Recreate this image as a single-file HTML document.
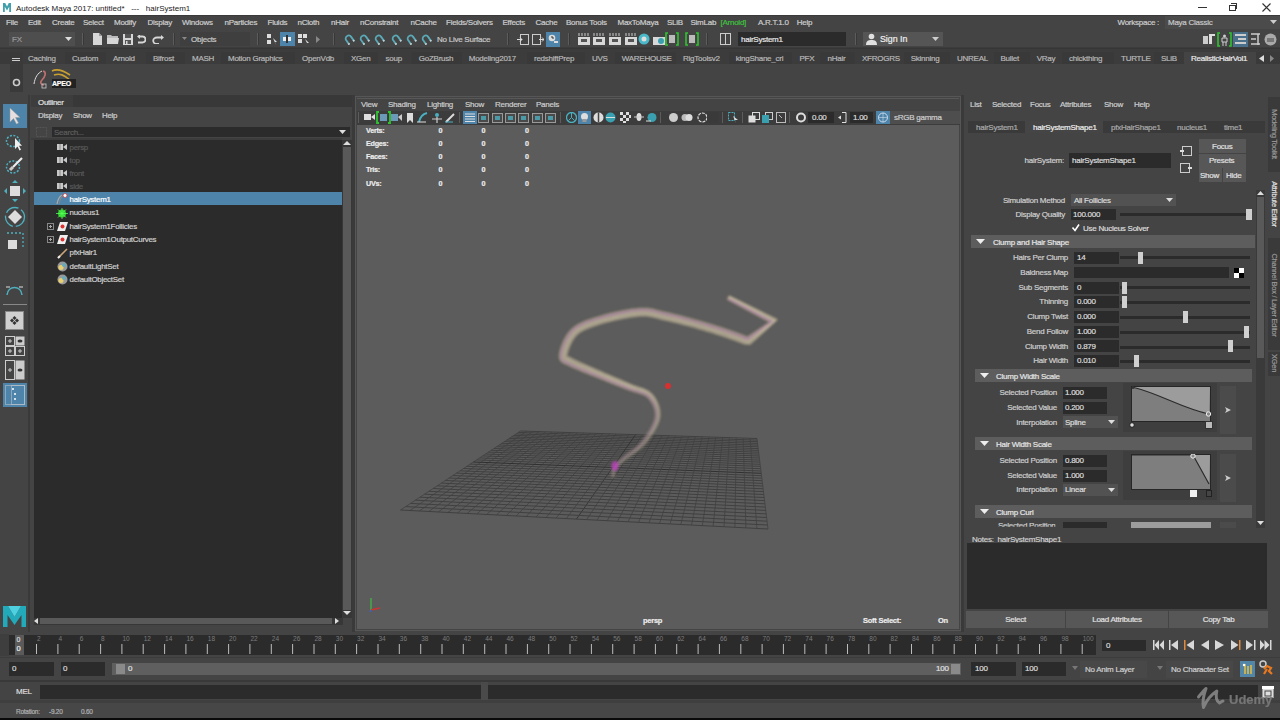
<!DOCTYPE html>
<html><head><meta charset="utf-8">
<style>
*{margin:0;padding:0;box-sizing:border-box}
html,body{width:1280px;height:720px;overflow:hidden;background:#444;font-family:"Liberation Sans",sans-serif;color:#c8c8c8;font-size:9px}
.a{position:absolute}
.t{position:absolute;white-space:nowrap;line-height:1;letter-spacing:-0.25px;-webkit-text-stroke:0.2px currentColor}
</style></head><body>
<div class="a" style="left:0px;top:0px;width:1280px;height:15px;background:#ffffff;"></div><svg class="a" style="left:3px;top:3px;" width="8" height="9" viewBox="0 0 8 9"><path d="M0 9V0h2.2l1.8 3.6L5.8 0H8v9H6.2V3.8L4 7.4 1.8 3.8V9z" fill="#1f8f9c" opacity="0.85"/></svg><div class="t" style="left:16px;top:5.24px;font-size:8px;color:#222;letter-spacing:0;-webkit-text-stroke:0">Autodesk Maya 2017: untitled*&nbsp;&nbsp;&nbsp;---&nbsp;&nbsp;&nbsp;hairSystem1</div><div class="a" style="left:1198px;top:7px;width:9px;height:1px;background:#333;"></div><div class="a" style="left:1229px;top:5px;width:7px;height:6px;border:1px solid #333"></div><div class="a" style="left:1231px;top:3px;width:6px;height:6px;border-top:1px solid #333;border-right:1px solid #333"></div><svg class="a" style="left:1262px;top:3px;" width="9" height="9" viewBox="0 0 9 9"><path d="M0.5 0.5L8.5 8.5M8.5 0.5L0.5 8.5" stroke="#333" stroke-width="1.1"/></svg><div class="a" style="left:0px;top:15px;width:1280px;height:16px;background:#444;"></div><div class="a" style="left:0px;top:15px;width:1280px;height:1px;background:#3a3a3a;"></div><div class="t" style="left:6px;top:19.24px;font-size:8.0px;color:#cecece;">File</div><div class="t" style="left:28px;top:19.24px;font-size:8.0px;color:#cecece;">Edit</div><div class="t" style="left:52px;top:19.24px;font-size:8.0px;color:#cecece;">Create</div><div class="t" style="left:83px;top:19.24px;font-size:8.0px;color:#cecece;">Select</div><div class="t" style="left:114px;top:19.24px;font-size:8.0px;color:#cecece;">Modify</div><div class="t" style="left:147.5px;top:19.24px;font-size:8.0px;color:#cecece;">Display</div><div class="t" style="left:182px;top:19.24px;font-size:8.0px;color:#cecece;">Windows</div><div class="t" style="left:224.5px;top:19.24px;font-size:8.0px;color:#cecece;">nParticles</div><div class="t" style="left:267.5px;top:19.24px;font-size:8.0px;color:#cecece;">Fluids</div><div class="t" style="left:297.5px;top:19.24px;font-size:8.0px;color:#cecece;">nCloth</div><div class="t" style="left:331px;top:19.24px;font-size:8.0px;color:#cecece;">nHair</div><div class="t" style="left:360px;top:19.24px;font-size:8.0px;color:#cecece;">nConstraint</div><div class="t" style="left:410.5px;top:19.24px;font-size:8.0px;color:#cecece;">nCache</div><div class="t" style="left:446px;top:19.24px;font-size:8.0px;color:#cecece;">Fields/Solvers</div><div class="t" style="left:502.5px;top:19.24px;font-size:8.0px;color:#cecece;">Effects</div><div class="t" style="left:535.5px;top:19.24px;font-size:8.0px;color:#cecece;">Cache</div><div class="t" style="left:566px;top:19.24px;font-size:8.0px;color:#cecece;">Bonus Tools</div><div class="t" style="left:617.5px;top:19.24px;font-size:8.0px;color:#cecece;">MaxToMaya</div><div class="t" style="left:667px;top:19.24px;font-size:8.0px;color:#cecece;">SLiB</div><div class="t" style="left:690.5px;top:19.24px;font-size:8.0px;color:#cecece;">SimLab</div><div class="t" style="left:758px;top:19.24px;font-size:8.0px;color:#cecece;">A.R.T.1.0</div><div class="t" style="left:796.75px;top:19.24px;font-size:8.0px;color:#cecece;">Help</div><div class="t" style="left:720.5px;top:19.24px;font-size:8.0px;color:#3fc23f;">[Arnold]</div><div class="t" style="left:1117.5px;top:18.74px;font-size:8.0px;color:#cecece;">Workspace :</div><div class="a" style="left:1165px;top:16px;width:115px;height:13px;background:#4b4b4b;"></div><div class="t" style="left:1168px;top:18.74px;font-size:8.0px;color:#c8c8c8;">Maya Classic</div><svg class="a" style="left:1270px;top:20px;" width="7" height="5" viewBox="0 0 7 5"><path d="M0 0h7L3.5 4z" fill="#ccc"/></svg><div class="a" style="left:0px;top:31px;width:1280px;height:17px;background:#444;"></div><div class="a" style="left:9px;top:32px;width:66px;height:14px;background:#4e4e4e;"></div><div class="t" style="left:12px;top:35.74px;font-size:8px;color:#9a9a9a;">FX</div><svg class="a" style="left:65px;top:37px;" width="7" height="4" viewBox="0 0 7 4"><path d="M0 0h7L3.5 4z" fill="#ddd"/></svg><div class="a" style="left:82px;top:33px;width:1px;height:12px;background:#5c5c5c;"></div><div class="a" style="left:83px;top:33px;width:1px;height:12px;background:#383838;"></div><div class="a" style="left:173px;top:33px;width:1px;height:12px;background:#5c5c5c;"></div><div class="a" style="left:174px;top:33px;width:1px;height:12px;background:#383838;"></div><div class="a" style="left:257px;top:33px;width:1px;height:12px;background:#5c5c5c;"></div><div class="a" style="left:258px;top:33px;width:1px;height:12px;background:#383838;"></div><div class="a" style="left:333px;top:33px;width:1px;height:12px;background:#5c5c5c;"></div><div class="a" style="left:334px;top:33px;width:1px;height:12px;background:#383838;"></div><div class="a" style="left:507px;top:33px;width:1px;height:12px;background:#5c5c5c;"></div><div class="a" style="left:508px;top:33px;width:1px;height:12px;background:#383838;"></div><div class="a" style="left:568px;top:33px;width:1px;height:12px;background:#5c5c5c;"></div><div class="a" style="left:569px;top:33px;width:1px;height:12px;background:#383838;"></div><div class="a" style="left:706px;top:33px;width:1px;height:12px;background:#5c5c5c;"></div><div class="a" style="left:707px;top:33px;width:1px;height:12px;background:#383838;"></div><div class="a" style="left:855px;top:33px;width:1px;height:12px;background:#5c5c5c;"></div><div class="a" style="left:856px;top:33px;width:1px;height:12px;background:#383838;"></div><svg class="a" style="left:93px;top:33px;" width="9" height="12" viewBox="0 0 9 12"><path d="M0 0h6l3 3v9H0z" fill="#d6d6d6"/><path d="M6 0v3h3" fill="#999"/></svg><svg class="a" style="left:107px;top:34px;" width="12" height="10" viewBox="0 0 12 10"><path d="M0 1h4l1 1h6v2H0z" fill="#bbb"/><path d="M0 4h12l-1 6H0z" fill="#d6d6d6"/></svg><svg class="a" style="left:123px;top:34px;" width="10" height="11" viewBox="0 0 10 11"><path d="M0 0h10v11H0z" fill="#d6d6d6"/><rect x="2" y="0" width="6" height="4" fill="#555"/><rect x="2" y="6" width="6" height="4" fill="#555"/><rect x="3" y="7" width="1.5" height="3" fill="#d6d6d6"/></svg><svg class="a" style="left:137px;top:35px;" width="9" height="9" viewBox="0 0 9 9"><path d="M2 1.5h3.5a3 3 0 0 1 0 6H1" fill="none" stroke="#d6d6d6" stroke-width="1.8"/><path d="M0 1.5L3 -1v5z" fill="#d6d6d6"/></svg><svg class="a" style="left:152px;top:35px;" width="12" height="9" viewBox="0 0 12 9"><path d="M10 2.5H5a3.5 3 0 0 0 0 6.5h2" fill="none" stroke="#d6d6d6" stroke-width="1.8"/><path d="M12 2.5L9 0v5z" fill="#d6d6d6"/></svg><div class="a" style="left:180px;top:32px;width:70px;height:14px;background:#3f3f3f;"></div><svg class="a" style="left:182px;top:37px;" width="5" height="4" viewBox="0 0 5 4"><path d="M0 0h5L2.5 3z" fill="#888"/></svg><div class="t" style="left:191px;top:35.74px;font-size:8.0px;color:#c8c8c8;">Objects</div><svg class="a" style="left:267px;top:34px;" width="11" height="11" viewBox="0 0 11 11"><rect x="0" y="0" width="4" height="4" fill="#ddd"/><rect x="0" y="6" width="4" height="4" fill="#ddd"/><path d="M6 4l4 4-2 0 1 3z" fill="#ddd"/></svg><div class="a" style="left:280px;top:32px;width:15px;height:14px;background:#4e84aa;"></div><svg class="a" style="left:282px;top:34px;" width="11" height="10" viewBox="0 0 11 10"><rect x="1" y="3" width="3" height="4" fill="#eee"/><rect x="6" y="3" width="3" height="4" fill="#eee"/><rect x="4" y="1" width="2" height="8" fill="#333"/></svg><svg class="a" style="left:298px;top:34px;" width="12" height="11" viewBox="0 0 12 11"><rect x="0" y="0" width="4" height="4" fill="#ddd"/><rect x="5" y="0" width="4" height="4" fill="#ddd"/><rect x="0" y="5" width="4" height="4" fill="#ddd"/><path d="M7 5l4 4-2 0 1 2z" fill="#ddd"/></svg><svg class="a" style="left:316px;top:36px;" width="4" height="7" viewBox="0 0 4 7"><path d="M0 0l4 3.5L0 7z" fill="#888"/></svg><svg class="a" style="left:343px;top:33px;" width="12" height="12" viewBox="0 0 12 12"><g transform="rotate(-35 6 6)"><path d="M3 11V5.5a3 3 0 0 1 6 0V11" fill="none" stroke="#5aaab8" stroke-width="1.8"/><path d="M2.2 10h1.8M8 10h1.8" stroke="#ccc" stroke-width="1.6"/></g></svg><svg class="a" style="left:358px;top:33px;" width="12" height="12" viewBox="0 0 12 12"><g transform="rotate(-35 6 6)"><path d="M3 11V5.5a3 3 0 0 1 6 0V11" fill="none" stroke="#5aaab8" stroke-width="1.8"/><path d="M2.2 10h1.8M8 10h1.8" stroke="#ccc" stroke-width="1.6"/></g></svg><svg class="a" style="left:373px;top:33px;" width="12" height="12" viewBox="0 0 12 12"><g transform="rotate(-35 6 6)"><path d="M3 11V5.5a3 3 0 0 1 6 0V11" fill="none" stroke="#5aaab8" stroke-width="1.8"/><path d="M2.2 10h1.8M8 10h1.8" stroke="#ccc" stroke-width="1.6"/></g></svg><svg class="a" style="left:390px;top:33px;" width="12" height="12" viewBox="0 0 12 12"><g transform="rotate(-35 6 6)"><path d="M3 11V5.5a3 3 0 0 1 6 0V11" fill="none" stroke="#5aaab8" stroke-width="1.8"/><path d="M2.2 10h1.8M8 10h1.8" stroke="#ccc" stroke-width="1.6"/></g></svg><svg class="a" style="left:405px;top:33px;" width="12" height="12" viewBox="0 0 12 12"><g transform="rotate(-35 6 6)"><path d="M3 11V5.5a3 3 0 0 1 6 0V11" fill="none" stroke="#5aaab8" stroke-width="1.8"/><path d="M2.2 10h1.8M8 10h1.8" stroke="#ccc" stroke-width="1.6"/></g></svg><svg class="a" style="left:420px;top:33px;" width="12" height="12" viewBox="0 0 12 12"><g transform="rotate(-35 6 6)"><path d="M3 11V5.5a3 3 0 0 1 6 0V11" fill="none" stroke="#5aaab8" stroke-width="1.8"/><path d="M2.2 10h1.8M8 10h1.8" stroke="#ccc" stroke-width="1.6"/></g></svg><div class="t" style="left:437px;top:35.74px;font-size:8.0px;color:#c8c8c8;">No Live Surface</div><svg class="a" style="left:517px;top:34px;" width="12" height="11" viewBox="0 0 12 11"><rect x="3.5" y="0.5" width="8" height="10" fill="none" stroke="#ccc"/><path d="M0 5.5h5M3 3.5l2 2-2 2" stroke="#ddd" fill="none"/></svg><svg class="a" style="left:532px;top:34px;" width="12" height="11" viewBox="0 0 12 11"><rect x="0.5" y="0.5" width="8" height="10" fill="none" stroke="#ccc"/><path d="M7 5.5h5M10 3.5l2 2-2 2" stroke="#ddd" fill="none"/></svg><div class="a" style="left:546px;top:32px;width:14px;height:15px;background:#4e84aa;"></div><svg class="a" style="left:548px;top:34px;" width="10" height="11" viewBox="0 0 10 11"><circle cx="4" cy="4" r="3.3" fill="#ddd"/><path d="M4 2v2h2" stroke="#333" fill="none"/><rect x="6" y="7" width="4" height="2" fill="#ddd"/></svg><svg class="a" style="left:578px;top:33px;" width="12" height="12" viewBox="0 0 12 12"><rect x="0" y="4" width="12" height="8" fill="#d8d8d8"/><path d="M1 0v3M4 0v3M7 0v3M10 0v3" stroke="#ccc"/><rect x="3" y="6" width="6" height="3" fill="#555"/></svg><svg class="a" style="left:593px;top:33px;" width="12" height="12" viewBox="0 0 12 12"><rect x="0" y="4" width="12" height="8" fill="#d8d8d8"/><path d="M1 0v3M4 0v3M7 0v3M10 0v3" stroke="#ccc"/><rect x="3" y="6" width="6" height="3" fill="#555"/></svg><svg class="a" style="left:609px;top:33px;" width="12" height="12" viewBox="0 0 12 12"><rect x="0" y="4" width="12" height="8" fill="#d8d8d8"/><path d="M1 0v3M4 0v3M7 0v3M10 0v3" stroke="#ccc"/><rect x="3" y="6" width="6" height="3" fill="#555"/></svg><svg class="a" style="left:625px;top:33px;" width="12" height="12" viewBox="0 0 12 12"><rect x="0" y="4" width="12" height="8" fill="#d8d8d8"/><path d="M1 0v3M4 0v3M7 0v3M10 0v3" stroke="#ccc"/><rect x="3" y="6" width="6" height="3" fill="#555"/></svg><svg class="a" style="left:638px;top:33px;" width="12" height="12" viewBox="0 0 12 12"><circle cx="6" cy="6" r="5.5" fill="#4ab8c8"/><circle cx="6" cy="6" r="2.5" fill="#ddd"/></svg><svg class="a" style="left:653px;top:33px;" width="12" height="12" viewBox="0 0 12 12"><rect x="0" y="4" width="12" height="8" fill="#d8d8d8"/><circle cx="8" cy="8" r="3" fill="#3aa0b0"/></svg><svg class="a" style="left:665px;top:32px;" width="14" height="14" viewBox="0 0 14 14"><path d="M3 1H1v12h2M11 1h2v12h-2" stroke="#2fc42f" stroke-width="1.6" fill="none"/><rect x="4" y="3" width="6" height="8" fill="#bbb"/></svg><svg class="a" style="left:685px;top:32px;" width="14" height="14" viewBox="0 0 14 14"><path d="M3 1H1v12h2M11 1h2v12h-2" stroke="#2fc42f" stroke-width="1.6" fill="none"/><rect x="4" y="3" width="6" height="8" fill="#bbb"/></svg><svg class="a" style="left:720px;top:33px;" width="11" height="12" viewBox="0 0 11 12"><rect x="0.5" y="0.5" width="10" height="11" fill="none" stroke="#ccc"/><path d="M5.5 0v12" stroke="#ccc"/></svg><div class="a" style="left:738px;top:32px;width:108px;height:14px;background:#2b2b2b;"></div><div class="t" style="left:741px;top:35.74px;font-size:8.0px;color:#e6e6e6;">hairSystem1</div><div class="a" style="left:863px;top:32px;width:80px;height:14px;background:#555;"></div><svg class="a" style="left:866px;top:33px;" width="11" height="12" viewBox="0 0 11 12"><circle cx="5.5" cy="3.5" r="2.8" fill="#e0e0e0"/><path d="M0 12c0-4 2-5 5.5-5s5.5 1 5.5 5z" fill="#e0e0e0"/></svg><div class="t" style="left:880px;top:35.36px;font-size:8.8px;color:#eeeeee;letter-spacing:0">Sign In</div><svg class="a" style="left:932px;top:37px;" width="7" height="4" viewBox="0 0 7 4"><path d="M0 0h7L3.5 4z" fill="#ccc"/></svg><svg class="a" style="left:1203px;top:33px;" width="12" height="12" viewBox="0 0 12 12"><rect x="0" y="3" width="5" height="8" fill="#ccc"/><rect x="6" y="1" width="3" height="10" fill="#ddd"/><rect x="9" y="1" width="3" height="2" fill="#ddd"/></svg><svg class="a" style="left:1217px;top:32px;" width="15" height="15" viewBox="0 0 15 15"><path d="M3 1H1v13h2M12 1h2v13h-2" stroke="#2fc42f" stroke-width="1.6" fill="none"/><circle cx="7.5" cy="4" r="1.5" fill="#ccc"/><path d="M5 6h5v4H5zM6 10v4M9 10v4" stroke="#ccc" fill="none"/></svg><div class="a" style="left:1233px;top:32px;width:15px;height:15px;background:#4a6f8a;"></div><svg class="a" style="left:1235px;top:34px;" width="11" height="11" viewBox="0 0 11 11"><rect x="0" y="0" width="11" height="2" fill="#ccc"/><rect x="3" y="4" width="8" height="2" fill="#ccc"/><rect x="0" y="8" width="11" height="2" fill="#ccc"/></svg><svg class="a" style="left:1250px;top:33px;" width="11" height="12" viewBox="0 0 11 12"><path d="M1 1h9M1 6h5M1 11h9M8 1v11" stroke="#ccc" stroke-width="1.5" fill="none"/></svg><svg class="a" style="left:1264px;top:33px;" width="13" height="13" viewBox="0 0 13 13"><circle cx="6.5" cy="6.5" r="6" fill="#aaa"/><rect x="3" y="5" width="7" height="4" fill="#777"/></svg><div class="a" style="left:0px;top:47px;width:1280px;height:5px;background:#3c3c3c;"></div><div class="a" style="left:0px;top:48px;width:1280px;height:1px;background:#363636;"></div><div class="a" style="left:0px;top:52px;width:1280px;height:12px;background:#3a3a3a;"></div><div class="a" style="left:21px;top:52px;width:44px;height:12px;background:#3c3c3c;"></div><div class="a" style="left:65px;top:52px;width:41px;height:12px;background:#393939;"></div><div class="a" style="left:106px;top:52px;width:40px;height:12px;background:#3c3c3c;"></div><div class="a" style="left:146px;top:52px;width:39px;height:12px;background:#393939;"></div><div class="a" style="left:185px;top:52px;width:36px;height:12px;background:#3c3c3c;"></div><div class="a" style="left:221px;top:52px;width:74px;height:12px;background:#393939;"></div><div class="a" style="left:295px;top:52px;width:49px;height:12px;background:#3c3c3c;"></div><div class="a" style="left:344px;top:52px;width:34px;height:12px;background:#393939;"></div><div class="a" style="left:378px;top:52px;width:33px;height:12px;background:#3c3c3c;"></div><div class="a" style="left:412px;top:52px;width:50px;height:12px;background:#393939;"></div><div class="a" style="left:462px;top:52px;width:65px;height:12px;background:#3c3c3c;"></div><div class="a" style="left:527px;top:52px;width:58px;height:12px;background:#393939;"></div><div class="a" style="left:585px;top:52px;width:30px;height:12px;background:#3c3c3c;"></div><div class="a" style="left:615px;top:52px;width:61px;height:12px;background:#393939;"></div><div class="a" style="left:676px;top:52px;width:53px;height:12px;background:#3c3c3c;"></div><div class="a" style="left:729px;top:52px;width:64px;height:12px;background:#393939;"></div><div class="a" style="left:792px;top:52px;width:28px;height:12px;background:#3c3c3c;"></div><div class="a" style="left:820px;top:52px;width:34px;height:12px;background:#393939;"></div><div class="a" style="left:855px;top:52px;width:49px;height:12px;background:#3c3c3c;"></div><div class="a" style="left:904px;top:52px;width:46px;height:12px;background:#393939;"></div><div class="a" style="left:950px;top:52px;width:44px;height:12px;background:#3c3c3c;"></div><div class="a" style="left:994px;top:52px;width:36px;height:12px;background:#393939;"></div><div class="a" style="left:1030px;top:52px;width:32px;height:12px;background:#3c3c3c;"></div><div class="a" style="left:1062px;top:52px;width:52px;height:12px;background:#393939;"></div><div class="a" style="left:1114px;top:52px;width:40px;height:12px;background:#3c3c3c;"></div><div class="a" style="left:1154px;top:52px;width:23px;height:12px;background:#393939;"></div><div class="t" style="left:28px;top:54.74px;font-size:8.0px;color:#b8b8b8;">Caching</div><div class="t" style="left:72px;top:54.74px;font-size:8.0px;color:#b8b8b8;">Custom</div><div class="t" style="left:113px;top:54.74px;font-size:8.0px;color:#b8b8b8;">Arnold</div><div class="t" style="left:153px;top:54.74px;font-size:8.0px;color:#b8b8b8;">Bifrost</div><div class="t" style="left:192px;top:54.74px;font-size:8.0px;color:#b8b8b8;">MASH</div><div class="t" style="left:228px;top:54.74px;font-size:8.0px;color:#b8b8b8;">Motion Graphics</div><div class="t" style="left:302px;top:54.74px;font-size:8.0px;color:#b8b8b8;">OpenVdb</div><div class="t" style="left:351px;top:54.74px;font-size:8.0px;color:#b8b8b8;">XGen</div><div class="t" style="left:385.5px;top:54.74px;font-size:8.0px;color:#b8b8b8;">soup</div><div class="t" style="left:418.75px;top:54.74px;font-size:8.0px;color:#b8b8b8;">GoZBrush</div><div class="t" style="left:468.75px;top:54.74px;font-size:8.0px;color:#b8b8b8;">Modeling2017</div><div class="t" style="left:534px;top:54.74px;font-size:8.0px;color:#b8b8b8;">redshiftPrep</div><div class="t" style="left:592px;top:54.74px;font-size:8.0px;color:#b8b8b8;">UVS</div><div class="t" style="left:621.75px;top:54.74px;font-size:8.0px;color:#b8b8b8;">WAREHOUSE</div><div class="t" style="left:683px;top:54.74px;font-size:8.0px;color:#b8b8b8;">RigToolsv2</div><div class="t" style="left:735.75px;top:54.74px;font-size:8.0px;color:#b8b8b8;">kingShane_cri</div><div class="t" style="left:799.5px;top:54.74px;font-size:8.0px;color:#b8b8b8;">PFX</div><div class="t" style="left:827.5px;top:54.74px;font-size:8.0px;color:#b8b8b8;">nHair</div><div class="t" style="left:862px;top:54.74px;font-size:8.0px;color:#b8b8b8;">XFROGRS</div><div class="t" style="left:910.75px;top:54.74px;font-size:8.0px;color:#b8b8b8;">Skinning</div><div class="t" style="left:957px;top:54.74px;font-size:8.0px;color:#b8b8b8;">UNREAL</div><div class="t" style="left:1000.5px;top:54.74px;font-size:8.0px;color:#b8b8b8;">Bullet</div><div class="t" style="left:1036.75px;top:54.74px;font-size:8.0px;color:#b8b8b8;">VRay</div><div class="t" style="left:1069px;top:54.74px;font-size:8.0px;color:#b8b8b8;">chickthing</div><div class="t" style="left:1121px;top:54.74px;font-size:8.0px;color:#b8b8b8;">TURTLE</div><div class="t" style="left:1161px;top:54.74px;font-size:8.0px;color:#b8b8b8;">SLiB</div><div class="a" style="left:1184px;top:52px;width:72px;height:12px;background:#444;"></div><div class="t" style="left:1191px;top:54.74px;font-size:8.0px;color:#ececec;">RealisticHairVol1</div><svg class="a" style="left:1259px;top:55px;" width="5" height="7" viewBox="0 0 5 7"><path d="M5 0L0 3.5 5 7z" fill="#ddd"/></svg><svg class="a" style="left:1270px;top:55px;" width="4" height="7" viewBox="0 0 4 7"><path d="M0 0l4 3.5L0 7z" fill="#888"/></svg><div class="a" style="left:0px;top:64px;width:1280px;height:31px;background:#444;"></div><div class="a" style="left:10px;top:52px;width:13px;height:40px;background:#3a3a3a;"></div><div class="a" style="left:12px;top:58px;width:8px;height:1px;background:#ccc;"></div><div class="a" style="left:12px;top:60px;width:8px;height:1px;background:#ccc;"></div><svg class="a" style="left:12px;top:78px;" width="9" height="9" viewBox="0 0 9 9"><circle cx="4.5" cy="4.5" r="3" fill="none" stroke="#ccc" stroke-width="1.6"/></svg><svg class="a" style="left:32px;top:67px;" width="16" height="22" viewBox="0 0 16 22"><path d="M2 17C3 10 6 6 10 4" stroke="#ddd" stroke-width="1" fill="none"/><path d="M11 4c4 1 2 6 -1 9s0 5 2 5" stroke="#c07070" stroke-width="1.6" fill="none"/><rect x="10" y="17" width="4" height="4" fill="none" stroke="#ccc" stroke-width="0.8"/></svg><svg class="a" style="left:50px;top:67px;" width="26" height="22" viewBox="0 0 26 22"><path d="M2 4c6-3 12 0 18 4M4 8c6-2 10 0 16 5" stroke="#c9a030" stroke-width="1.6" fill="none"/><rect x="2" y="12" width="24" height="9" fill="#222"/></svg><div class="t" style="left:52px;top:79.71px;font-size:7px;color:#fff;font-weight:bold">APEO</div><div class="a" style="left:0px;top:95px;width:28px;height:537px;background:#444;"></div><div class="a" style="left:28px;top:95px;width:2px;height:537px;background:#3a3a3a;"></div><div class="a" style="left:3px;top:104px;width:24px;height:24px;background:#4e84aa;"></div><svg class="a" style="left:9px;top:107px;" width="12" height="18" viewBox="0 0 12 18"><path d="M1 1v14l3.5-3.5 3 5.5 2-1-3-5.5H11z" fill="#e8e0e0" stroke="#999" stroke-width="0.5"/></svg><svg class="a" style="left:5px;top:133px;" width="20" height="18" viewBox="0 0 20 18"><ellipse cx="8" cy="8" rx="6.5" ry="5.5" fill="none" stroke="#4fb0c0" stroke-width="1.5" stroke-dasharray="2 1.5"/><path d="M10 5v11l2.5-2.5 2 4 1.5-.8-2-4H17z" fill="#eee"/></svg><svg class="a" style="left:5px;top:156px;" width="20" height="19" viewBox="0 0 20 19"><ellipse cx="8" cy="11" rx="6.5" ry="6" fill="none" stroke="#4fb0c0" stroke-width="1.5" stroke-dasharray="2 1.5"/><path d="M8 11l9-9" stroke="#eee" stroke-width="2.2"/><path d="M5 14l3-3" stroke="#ccc" stroke-width="3"/></svg><svg class="a" style="left:4px;top:180px;" width="22" height="22" viewBox="0 0 22 22"><rect x="6" y="6" width="10" height="10" fill="#ddd"/><path d="M11 0l3 3H8zM11 22l3-3H8zM0 11l3 3V8zM22 11l-3 3V8z" fill="#4fb0c0"/></svg><svg class="a" style="left:4px;top:206px;" width="22" height="22" viewBox="0 0 22 22"><circle cx="11" cy="11" r="9.5" fill="none" stroke="#4fb0c0" stroke-width="1.3" stroke-dasharray="14 3"/><path d="M11 4l7 7-7 7-7-7z" fill="#ddd"/></svg><svg class="a" style="left:4px;top:230px;" width="22" height="22" viewBox="0 0 22 22"><path d="M3 3h16v16" fill="none" stroke="#4fb0c0" stroke-width="1.3" stroke-dasharray="2 2"/><rect x="4" y="10" width="9" height="9" fill="#ddd"/></svg><svg class="a" style="left:5px;top:281px;" width="19" height="15" viewBox="0 0 19 15"><path d="M2 14C3 4 16 4 17 14" fill="none" stroke="#4fb0c0" stroke-width="1.5"/><path d="M1 6h4M14 6h4" stroke="#ddd" stroke-width="1.2"/></svg><div class="a" style="left:3px;top:304px;width:24px;height:1px;background:#888;"></div><div class="a" style="left:5px;top:311px;width:19px;height:19px;background:#cfcfcf;border:1px solid #888"></div><svg class="a" style="left:7px;top:313px;" width="15" height="15" viewBox="0 0 15 15"><path d="M7.5 3l2 2-2 2-2-2zM3 7.5l2-2 2 2-2 2zM12 7.5l-2-2-2 2 2 2zM7.5 12l2-2-2-2-2 2z" fill="#333"/></svg><svg class="a" style="left:5px;top:336px;" width="20" height="20" viewBox="0 0 20 20"><rect x="0.5" y="0.5" width="9" height="9" fill="none" stroke="#ccc"/><rect x="10.5" y="0.5" width="9" height="9" fill="#ccc"/><rect x="0.5" y="10.5" width="9" height="9" fill="none" stroke="#ccc"/><rect x="10.5" y="10.5" width="9" height="9" fill="none" stroke="#ccc"/><path d="M5 3v4M3 5h4M5 13v4M3 15h4M15 13v4M13 15h4" stroke="#ccc"/><ellipse cx="15" cy="5" rx="2.5" ry="1.5" fill="#333"/></svg><svg class="a" style="left:5px;top:360px;" width="20" height="20" viewBox="0 0 20 20"><rect x="0.5" y="0.5" width="9" height="19" fill="none" stroke="#ccc"/><rect x="10.5" y="0.5" width="9" height="19" fill="#ccc"/><path d="M5 8v4M3 10h4" stroke="#ccc"/><ellipse cx="15" cy="10" rx="2.5" ry="1.5" fill="#333"/></svg><div class="a" style="left:3px;top:383px;width:24px;height:24px;background:#4e84aa;"></div><svg class="a" style="left:5px;top:385px;" width="20" height="20" viewBox="0 0 20 20"><rect x="0.5" y="0.5" width="19" height="19" fill="none" stroke="#ccc" stroke-dasharray="1 1"/><rect x="6.5" y="0.5" width="13" height="19" fill="none" stroke="#ccc" stroke-dasharray="1 1"/><circle cx="8" cy="4" r="1" fill="#fff"/><circle cx="10" cy="9" r="1" fill="#fff"/><circle cx="10" cy="14" r="1" fill="#fff"/></svg><svg class="a" style="left:3px;top:606px;" width="23" height="21" viewBox="0 0 23 21"><path d="M0 21V0h5l6.5 11L18 0h5v21h-4.5V9L11.5 19 4.5 9v12z" fill="#22aabb"/><path d="M5 0l6.5 11L18 0" fill="#4fd0e0"/></svg><div class="a" style="left:31px;top:95px;width:321px;height:537px;background:#444;"></div><div class="a" style="left:31px;top:95px;width:321px;height:12px;background:#383838;"></div><div class="a" style="left:31px;top:95px;width:42px;height:12px;background:#3d3d3d;"></div><div class="t" style="left:38px;top:98.79px;font-size:7.9px;color:#e0e0e0;">Outliner</div><div class="t" style="left:38px;top:111.79px;font-size:7.9px;color:#cfcfcf;">Display</div><div class="t" style="left:73px;top:111.79px;font-size:7.9px;color:#cfcfcf;">Show</div><div class="t" style="left:102px;top:111.79px;font-size:7.9px;color:#cfcfcf;">Help</div><svg class="a" style="left:36px;top:127px;" width="11" height="10" viewBox="0 0 11 10"><rect x="0.5" y="0.5" width="10" height="9" fill="none" stroke="#555" stroke-dasharray="2 1"/></svg><div class="a" style="left:52px;top:127px;width:298px;height:10px;background:#2b2b2b;"></div><div class="t" style="left:54px;top:128.74px;font-size:8px;color:#5e5e5e;">Search...</div><svg class="a" style="left:339px;top:130px;" width="7" height="4" viewBox="0 0 7 4"><path d="M0 0h7L3.5 4z" fill="#ddd"/></svg><div class="a" style="left:31px;top:138px;width:311px;height:2px;background:#3c3c3c;"></div><div class="a" style="left:34px;top:140px;width:308px;height:478px;background:#2b2b2b;"></div><div class="a" style="left:342px;top:140px;width:10px;height:478px;background:#373737;"></div><div class="a" style="left:343px;top:147px;width:8px;height:463px;background:#595959;"></div><svg class="a" style="left:343px;top:141px;" width="8" height="4" viewBox="0 0 8 4"><path d="M0 4h8L4 0z" fill="#ddd"/></svg><svg class="a" style="left:343px;top:611px;" width="8" height="4" viewBox="0 0 8 4"><path d="M0 0h8L4 4z" fill="#ddd"/></svg><div class="a" style="left:34px;top:618px;width:309px;height:7px;background:#373737;"></div><div class="a" style="left:40px;top:618px;width:292px;height:6px;background:#595959;"></div><svg class="a" style="left:34px;top:618px;" width="4" height="6" viewBox="0 0 4 6"><path d="M4 0L0 3l4 3z" fill="#ddd"/></svg><svg class="a" style="left:335px;top:618px;" width="4" height="6" viewBox="0 0 4 6"><path d="M0 0l4 3-4 3z" fill="#ddd"/></svg><div class="a" style="left:34px;top:192px;width:308px;height:13px;background:#4e84aa;"></div><div class="t" style="left:69.5px;top:143.79px;font-size:7.9px;color:#5a5a5a;">persp</div><svg class="a" style="left:57px;top:144px;" width="10" height="6" viewBox="0 0 10 6"><rect x="0" y="0" width="6" height="6" fill="#c8c8c8"/><path d="M6 3l4-3v6z" fill="#c8c8c8"/><path d="M3 0v6" stroke="#888"/></svg><div class="t" style="left:69.5px;top:156.79px;font-size:7.9px;color:#5a5a5a;">top</div><svg class="a" style="left:57px;top:157px;" width="10" height="6" viewBox="0 0 10 6"><rect x="0" y="0" width="6" height="6" fill="#c8c8c8"/><path d="M6 3l4-3v6z" fill="#c8c8c8"/><path d="M3 0v6" stroke="#888"/></svg><div class="t" style="left:69.5px;top:169.79px;font-size:7.9px;color:#5a5a5a;">front</div><svg class="a" style="left:57px;top:170px;" width="10" height="6" viewBox="0 0 10 6"><rect x="0" y="0" width="6" height="6" fill="#c8c8c8"/><path d="M6 3l4-3v6z" fill="#c8c8c8"/><path d="M3 0v6" stroke="#888"/></svg><div class="t" style="left:69.5px;top:182.79px;font-size:7.9px;color:#5a5a5a;">side</div><svg class="a" style="left:57px;top:183px;" width="10" height="6" viewBox="0 0 10 6"><rect x="0" y="0" width="6" height="6" fill="#c8c8c8"/><path d="M6 3l4-3v6z" fill="#c8c8c8"/><path d="M3 0v6" stroke="#888"/></svg><div class="t" style="left:69.5px;top:195.79px;font-size:7.9px;color:#ffffff;">hairSystem1</div><svg class="a" style="left:56px;top:193px;" width="12" height="12" viewBox="0 0 12 12"><path d="M1 11C2 6 4 3 6 2" stroke="#aaa" stroke-width="1.2" fill="none"/><path d="M3 11C4 7 5 4 7 3" stroke="#888" stroke-width="1" fill="none"/><circle cx="9" cy="2.5" r="2" fill="#fff" stroke="#c44" stroke-width="0.8"/></svg><div class="t" style="left:69.5px;top:209.29px;font-size:7.9px;color:#d0d0d0;">nucleus1</div><svg class="a" style="left:56px;top:207.5px;" width="12" height="11" viewBox="0 0 12 11"><circle cx="6" cy="5.5" r="4" fill="#3c3"/><path d="M0 5.5h12M6 0v11M2 1.5l8 8M10 1.5l-8 8" stroke="#5f5" stroke-width="0.8"/></svg><div class="t" style="left:69.5px;top:222.79px;font-size:7.9px;color:#d0d0d0;">hairSystem1Follicles</div><svg class="a" style="left:57px;top:222px;" width="11" height="9" viewBox="0 0 11 9"><path d="M3 0h8L8 9H0z" fill="#eee"/><circle cx="5.5" cy="4.5" r="2" fill="#d33"/></svg><div class="a" style="left:47px;top:223px;width:7px;height:7px;border:1px solid #888"></div><div class="a" style="left:49px;top:226px;width:3px;height:1px;background:#aaa;"></div><div class="a" style="left:50px;top:225px;width:1px;height:3px;background:#aaa;"></div><div class="t" style="left:69.5px;top:235.79px;font-size:7.9px;color:#d0d0d0;">hairSystem1OutputCurves</div><svg class="a" style="left:57px;top:235px;" width="11" height="9" viewBox="0 0 11 9"><path d="M3 0h8L8 9H0z" fill="#eee"/><circle cx="5.5" cy="4.5" r="2" fill="#d33"/></svg><div class="a" style="left:47px;top:236px;width:7px;height:7px;border:1px solid #888"></div><div class="a" style="left:49px;top:239px;width:3px;height:1px;background:#aaa;"></div><div class="a" style="left:50px;top:238px;width:1px;height:3px;background:#aaa;"></div><div class="t" style="left:69.5px;top:249.29px;font-size:7.9px;color:#d0d0d0;">pfxHair1</div><svg class="a" style="left:57px;top:247.5px;" width="11" height="11" viewBox="0 0 11 11"><path d="M1 10L10 1" stroke="#c9a57a" stroke-width="1.6"/><path d="M1 10l2-2" stroke="#eee" stroke-width="2"/></svg><div class="t" style="left:69.5px;top:262.79px;font-size:7.9px;color:#d0d0d0;">defaultLightSet</div><svg class="a" style="left:57px;top:261px;" width="11" height="11" viewBox="0 0 11 11"><circle cx="5.5" cy="5.5" r="5" fill="#999"/><circle cx="4" cy="6.5" r="2.5" fill="#e8d070"/><circle cx="7" cy="4" r="2" fill="#6ab"/></svg><div class="t" style="left:69.5px;top:275.79px;font-size:7.9px;color:#d0d0d0;">defaultObjectSet</div><svg class="a" style="left:57px;top:274px;" width="11" height="11" viewBox="0 0 11 11"><circle cx="5.5" cy="5.5" r="5" fill="#999"/><circle cx="4" cy="6.5" r="2.5" fill="#e8d070"/><circle cx="7" cy="4" r="2" fill="#6ab"/></svg><div class="a" style="left:352px;top:95px;width:3px;height:537px;background:#3a3a3a;"></div><div class="a" style="left:355px;top:95px;width:607px;height:537px;background:#444;"></div><div class="a" style="left:355px;top:96px;width:606px;height:535px;border:1px solid #565656"></div><div class="a" style="left:357px;top:98px;width:602px;height:1px;background:#585858;"></div><div class="t" style="left:361px;top:101.24px;font-size:8.0px;color:#cecece;">View</div><div class="t" style="left:388px;top:101.24px;font-size:8.0px;color:#cecece;">Shading</div><div class="t" style="left:427px;top:101.24px;font-size:8.0px;color:#cecece;">Lighting</div><div class="t" style="left:465px;top:101.24px;font-size:8.0px;color:#cecece;">Show</div><div class="t" style="left:495px;top:101.24px;font-size:8.0px;color:#cecece;">Renderer</div><div class="t" style="left:536px;top:101.24px;font-size:8.0px;color:#cecece;">Panels</div><div class="a" style="left:357px;top:111px;width:603px;height:14px;background:#3c3c3c;"></div><div class="a" style="left:357px;top:125px;width:602px;height:504px;background:#5c5c5c;"></div><div class="a" style="left:358px;top:112px;width:1px;height:11px;background:#5c5c5c;"></div><div class="a" style="left:459px;top:112px;width:1px;height:11px;background:#5c5c5c;"></div><div class="a" style="left:560px;top:112px;width:1px;height:11px;background:#5c5c5c;"></div><div class="a" style="left:660px;top:112px;width:1px;height:11px;background:#5c5c5c;"></div><div class="a" style="left:722px;top:112px;width:1px;height:11px;background:#5c5c5c;"></div><div class="a" style="left:742px;top:112px;width:1px;height:11px;background:#5c5c5c;"></div><div class="a" style="left:789px;top:112px;width:1px;height:11px;background:#5c5c5c;"></div><svg class="a" style="left:364px;top:113px;" width="11" height="8" viewBox="0 0 11 8"><rect x="0" y="1" width="7" height="6" fill="#ddd"/><path d="M7 4l4-3v6z" fill="#ddd"/></svg><svg class="a" style="left:376px;top:111px;" width="15" height="13" viewBox="0 0 15 13"><path d="M3 1H1v11h2M12 1h2v11h-2" stroke="#2fc42f" stroke-width="1.8" fill="none"/><rect x="4" y="3" width="7" height="7" fill="#6a9ab8"/></svg><svg class="a" style="left:391px;top:113px;" width="11" height="9" viewBox="0 0 11 9"><rect x="0" y="1" width="7" height="7" fill="#6a9ab8"/><path d="M7 4l4-3v7z" fill="#ccc"/></svg><svg class="a" style="left:407px;top:113px;" width="6" height="10" viewBox="0 0 6 10"><path d="M0 0h6v10L3 7 0 10z" fill="#ddd"/></svg><svg class="a" style="left:417px;top:112px;" width="11" height="11" viewBox="0 0 11 11"><path d="M2 10C3 5 6 2 10 1" stroke="#4ab0c0" stroke-width="2" fill="none"/><path d="M0 10h9" stroke="#ddd"/></svg><svg class="a" style="left:432px;top:112px;" width="10" height="11" viewBox="0 0 10 11"><circle cx="5" cy="3" r="2" fill="#4ab0c0"/><path d="M0 7h10M5 5v6" stroke="#ccc" stroke-width="1.2"/></svg><svg class="a" style="left:445px;top:112px;" width="10" height="11" viewBox="0 0 10 11"><path d="M1 10L9 2" stroke="#ddd" stroke-width="2"/><path d="M0 10h8" stroke="#4ab0c0"/></svg><div class="a" style="left:463px;top:111px;width:14px;height:13px;background:#4e84aa;"></div><svg class="a" style="left:465px;top:113px;" width="10" height="9" viewBox="0 0 10 9"><path d="M0 1h10M0 3.5h10M0 6h10M0 8.5h10" stroke="#ddd"/></svg><svg class="a" style="left:478px;top:113px;" width="11" height="10" viewBox="0 0 11 10"><rect x="0.5" y="0.5" width="10" height="9" fill="#4a4a4a" stroke="#999"/><rect x="3" y="3" width="5" height="4" fill="#4a9aa8"/></svg><svg class="a" style="left:492px;top:113px;" width="11" height="10" viewBox="0 0 11 10"><rect x="0.5" y="0.5" width="10" height="9" fill="#4a4a4a" stroke="#999"/><rect x="3" y="3" width="5" height="4" fill="#4a9aa8"/></svg><svg class="a" style="left:505px;top:113px;" width="11" height="10" viewBox="0 0 11 10"><rect x="0.5" y="0.5" width="10" height="9" fill="#4a4a4a" stroke="#999"/><rect x="3" y="3" width="5" height="4" fill="#4a9aa8"/></svg><svg class="a" style="left:518px;top:113px;" width="11" height="10" viewBox="0 0 11 10"><rect x="0.5" y="0.5" width="10" height="9" fill="#4a4a4a" stroke="#999"/><rect x="3" y="3" width="5" height="4" fill="#4a9aa8"/></svg><svg class="a" style="left:532px;top:113px;" width="11" height="10" viewBox="0 0 11 10"><rect x="0.5" y="0.5" width="10" height="9" fill="#4a4a4a" stroke="#999"/><rect x="3" y="3" width="5" height="4" fill="#4a9aa8"/></svg><svg class="a" style="left:545px;top:113px;" width="11" height="10" viewBox="0 0 11 10"><rect x="0.5" y="0.5" width="10" height="9" fill="#4a4a4a" stroke="#999"/><rect x="3" y="3" width="5" height="4" fill="#4a9aa8"/></svg><svg class="a" style="left:566px;top:112px;" width="11" height="11" viewBox="0 0 11 11"><circle cx="5.5" cy="5.5" r="5" fill="none" stroke="#4ab0c0" stroke-width="1.3"/><path d="M5.5 5.5l-3 3M5.5 5.5l3 3M5.5 5.5v-5" stroke="#4ab0c0"/></svg><div class="a" style="left:578px;top:111px;width:13px;height:13px;background:#4e84aa;"></div><svg class="a" style="left:580px;top:112px;" width="9" height="11" viewBox="0 0 9 11"><circle cx="4.5" cy="4.5" r="3.5" fill="#ddd"/><rect x="2.5" y="7" width="4" height="3" fill="#999"/></svg><svg class="a" style="left:593px;top:112px;" width="11" height="11" viewBox="0 0 11 11"><circle cx="5.5" cy="5.5" r="5" fill="#ddd"/><path d="M5.5 0.5v10" stroke="#444" stroke-width="1.5"/></svg><svg class="a" style="left:605px;top:112px;" width="11" height="11" viewBox="0 0 11 11"><circle cx="5.5" cy="5.5" r="5" fill="#3aa0b0"/><path d="M1 5.5h9" stroke="#ddd"/></svg><svg class="a" style="left:620px;top:112px;" width="11" height="11" viewBox="0 0 11 11"><path d="M0 0h3v3H0zM6 0h3v3H6zM3 3h3v3H3zM9 3h2v3H9zM0 6h3v3H0zM6 6h3v3H6zM3 9h3v2H3z" fill="#ddd"/></svg><svg class="a" style="left:634px;top:112px;" width="10" height="11" viewBox="0 0 10 11"><ellipse cx="5" cy="5" rx="2.5" ry="4" fill="#ddd"/><path d="M0 5h10" stroke="#ccc"/></svg><svg class="a" style="left:646px;top:112px;" width="11" height="11" viewBox="0 0 11 11"><circle cx="6" cy="5.5" r="4.5" fill="#3aa0b0"/><path d="M0 9h5" stroke="#ddd"/></svg><svg class="a" style="left:668px;top:112px;" width="11" height="11" viewBox="0 0 11 11"><circle cx="5.5" cy="5.5" r="4.5" fill="#ccc"/></svg><svg class="a" style="left:681px;top:112px;" width="12" height="11" viewBox="0 0 12 11"><circle cx="4" cy="5.5" r="3.5" fill="#bbb"/><circle cx="8" cy="5.5" r="3.5" fill="#ddd"/></svg><svg class="a" style="left:697px;top:112px;" width="11" height="11" viewBox="0 0 11 11"><circle cx="5.5" cy="5.5" r="4.5" fill="none" stroke="#ddd" stroke-width="1.2" stroke-dasharray="3 1"/></svg><div class="a" style="left:707px;top:112px;width:11px;height:11px;background:#3a3a3a;"></div><svg class="a" style="left:728px;top:112px;" width="10" height="11" viewBox="0 0 10 11"><rect x="0.5" y="0.5" width="6" height="8" fill="none" stroke="#4ab0c0" stroke-dasharray="2 1"/><path d="M5 4l5 4H7l1 3z" fill="#ddd"/></svg><svg class="a" style="left:748px;top:112px;" width="12" height="11" viewBox="0 0 12 11"><rect x="0.5" y="3.5" width="7" height="7" fill="#ddd"/><rect x="4.5" y="0.5" width="7" height="7" fill="none" stroke="#ddd"/></svg><svg class="a" style="left:762px;top:112px;" width="11" height="11" viewBox="0 0 11 11"><rect x="3.5" y="0.5" width="7" height="7" fill="none" stroke="#ccc"/><rect x="0" y="3" width="7" height="8" fill="#3aa0b0"/></svg><svg class="a" style="left:776px;top:112px;" width="10" height="11" viewBox="0 0 10 11"><rect x="0.5" y="0.5" width="9" height="10" fill="none" stroke="#bbb"/><path d="M3 3l3 3" stroke="#bbb"/></svg><svg class="a" style="left:796px;top:112px;" width="10" height="11" viewBox="0 0 10 11"><circle cx="5" cy="5.5" r="4" fill="none" stroke="#ddd" stroke-width="2"/></svg><div class="a" style="left:808px;top:112px;width:26px;height:11px;background:#2b2b2b;"></div><div class="t" style="left:812px;top:114.24px;font-size:8.0px;color:#ddd;">0.00</div><svg class="a" style="left:838px;top:112px;" width="9" height="11" viewBox="0 0 9 11"><path d="M4 0.5h4v10H4" fill="none" stroke="#ddd"/><path d="M0 5.5l3-2v4z" fill="#ddd"/></svg><div class="a" style="left:850px;top:112px;width:23px;height:11px;background:#2b2b2b;"></div><div class="t" style="left:853px;top:114.24px;font-size:8.0px;color:#ddd;">1.00</div><div class="a" style="left:876px;top:111px;width:14px;height:13px;background:#4e84aa;"></div><svg class="a" style="left:877px;top:112px;" width="12" height="11" viewBox="0 0 12 11"><circle cx="6" cy="5.5" r="4.5" fill="none" stroke="#cde" stroke-width="1"/><path d="M6 1v9M1.5 5.5h9" stroke="#cde" stroke-width="0.6"/></svg><div class="a" style="left:890px;top:111px;width:70px;height:13px;background:#4e4e4e;"></div><div class="t" style="left:894px;top:114.24px;font-size:8.0px;color:#cfcfcf;">sRGB gamma</div><div class="t" style="left:366px;top:126.62px;font-size:7.2px;color:#ececec;font-weight:bold">Verts:</div><div class="t" style="left:438.5px;top:126.62px;font-size:7.2px;color:#ececec;font-weight:bold">0</div><div class="t" style="left:481.5px;top:126.62px;font-size:7.2px;color:#ececec;font-weight:bold">0</div><div class="t" style="left:525px;top:126.62px;font-size:7.2px;color:#ececec;font-weight:bold">0</div><div class="t" style="left:366px;top:139.62px;font-size:7.2px;color:#ececec;font-weight:bold">Edges:</div><div class="t" style="left:438.5px;top:139.62px;font-size:7.2px;color:#ececec;font-weight:bold">0</div><div class="t" style="left:481.5px;top:139.62px;font-size:7.2px;color:#ececec;font-weight:bold">0</div><div class="t" style="left:525px;top:139.62px;font-size:7.2px;color:#ececec;font-weight:bold">0</div><div class="t" style="left:366px;top:153.12px;font-size:7.2px;color:#ececec;font-weight:bold">Faces:</div><div class="t" style="left:438.5px;top:153.12px;font-size:7.2px;color:#ececec;font-weight:bold">0</div><div class="t" style="left:481.5px;top:153.12px;font-size:7.2px;color:#ececec;font-weight:bold">0</div><div class="t" style="left:525px;top:153.12px;font-size:7.2px;color:#ececec;font-weight:bold">0</div><div class="t" style="left:366px;top:166.12px;font-size:7.2px;color:#ececec;font-weight:bold">Tris:</div><div class="t" style="left:438.5px;top:166.12px;font-size:7.2px;color:#ececec;font-weight:bold">0</div><div class="t" style="left:481.5px;top:166.12px;font-size:7.2px;color:#ececec;font-weight:bold">0</div><div class="t" style="left:525px;top:166.12px;font-size:7.2px;color:#ececec;font-weight:bold">0</div><div class="t" style="left:366px;top:179.62px;font-size:7.2px;color:#ececec;font-weight:bold">UVs:</div><div class="t" style="left:438.5px;top:179.62px;font-size:7.2px;color:#ececec;font-weight:bold">0</div><div class="t" style="left:481.5px;top:179.62px;font-size:7.2px;color:#ececec;font-weight:bold">0</div><div class="t" style="left:525px;top:179.62px;font-size:7.2px;color:#ececec;font-weight:bold">0</div><div class="t" style="left:643px;top:616.98px;font-size:7.5px;color:#ececec;font-weight:bold">persp</div><div class="t" style="left:863px;top:616.98px;font-size:7.5px;color:#ececec;font-weight:bold">Soft Select:</div><div class="t" style="left:938px;top:616.98px;font-size:7.5px;color:#ececec;font-weight:bold">On</div><svg class="a" style="left:366px;top:595px;" width="16" height="18" viewBox="0 0 16 18"><path d="M5 15V3" stroke="#4a4" stroke-width="1.5"/><path d="M5 15l9-2" stroke="#c33" stroke-width="1.5"/><path d="M5 15l-1 2" stroke="#36c" stroke-width="1.5"/></svg><svg class="a" style="left:355px;top:420px;" width="420" height="115" viewBox="0 0 420 115"><path d="M165.5 11.0L45.5 90.0" stroke="#414141" stroke-width="0.8"/><path d="M165.5 11.0L402.0 18.5" stroke="#404040" stroke-width="1"/><path d="M171.7 11.2L54.9 90.5" stroke="#414141" stroke-width="0.8"/><path d="M163.3 12.4L402.2 20.1" stroke="#404040" stroke-width="1"/><path d="M178.0 11.4L64.3 91.0" stroke="#414141" stroke-width="0.8"/><path d="M161.1 13.9L402.4 21.7" stroke="#404040" stroke-width="1"/><path d="M184.3 11.6L73.8 91.5" stroke="#414141" stroke-width="0.8"/><path d="M158.9 15.4L402.6 23.4" stroke="#404040" stroke-width="1"/><path d="M190.5 11.8L83.3 92.0" stroke="#414141" stroke-width="0.8"/><path d="M156.5 16.9L402.8 25.1" stroke="#404040" stroke-width="1"/><path d="M196.8 12.0L92.9 92.5" stroke="#414141" stroke-width="0.8"/><path d="M154.2 18.4L403.0 26.8" stroke="#404040" stroke-width="1"/><path d="M203.2 12.2L102.5 92.9" stroke="#414141" stroke-width="0.8"/><path d="M151.8 20.0L403.2 28.6" stroke="#404040" stroke-width="1"/><path d="M209.5 12.4L112.2 93.4" stroke="#414141" stroke-width="0.8"/><path d="M149.3 21.6L403.4 30.4" stroke="#404040" stroke-width="1"/><path d="M215.9 12.6L121.9 93.9" stroke="#414141" stroke-width="0.8"/><path d="M146.8 23.3L403.7 32.2" stroke="#404040" stroke-width="1"/><path d="M222.3 12.8L131.6 94.5" stroke="#414141" stroke-width="0.8"/><path d="M144.3 25.0L403.9 34.1" stroke="#404040" stroke-width="1"/><path d="M228.7 13.0L141.4 95.0" stroke="#414141" stroke-width="0.8"/><path d="M141.6 26.7L404.1 36.0" stroke="#404040" stroke-width="1"/><path d="M235.1 13.2L151.3 95.5" stroke="#414141" stroke-width="0.8"/><path d="M139.0 28.5L404.4 38.0" stroke="#404040" stroke-width="1"/><path d="M241.5 13.4L161.2 96.0" stroke="#414141" stroke-width="0.8"/><path d="M136.2 30.3L404.6 40.1" stroke="#404040" stroke-width="1"/><path d="M248.0 13.6L171.1 96.5" stroke="#414141" stroke-width="0.8"/><path d="M133.4 32.1L404.9 42.1" stroke="#404040" stroke-width="1"/><path d="M254.5 13.8L181.1 97.0" stroke="#414141" stroke-width="0.8"/><path d="M130.6 34.0L405.1 44.3" stroke="#404040" stroke-width="1"/><path d="M261.0 14.0L191.1 97.5" stroke="#414141" stroke-width="0.8"/><path d="M127.6 35.9L405.4 46.4" stroke="#404040" stroke-width="1"/><path d="M267.5 14.2L201.2 98.0" stroke="#414141" stroke-width="0.8"/><path d="M124.7 37.9L405.7 48.7" stroke="#404040" stroke-width="1"/><path d="M274.0 14.4L211.3 98.6" stroke="#414141" stroke-width="0.8"/><path d="M121.6 39.9L405.9 51.0" stroke="#404040" stroke-width="1"/><path d="M280.6 14.6L221.4 99.1" stroke="#2e2e2e" stroke-width="0.8"/><path d="M118.4 42.0L406.2 53.3" stroke="#303030" stroke-width="1"/><path d="M287.1 14.9L231.7 99.6" stroke="#414141" stroke-width="0.8"/><path d="M115.2 44.1L406.5 55.7" stroke="#404040" stroke-width="1"/><path d="M293.7 15.1L241.9 100.2" stroke="#414141" stroke-width="0.8"/><path d="M111.9 46.3L406.8 58.2" stroke="#404040" stroke-width="1"/><path d="M300.3 15.3L252.2 100.7" stroke="#414141" stroke-width="0.8"/><path d="M108.6 48.5L407.1 60.7" stroke="#404040" stroke-width="1"/><path d="M307.0 15.5L262.6 101.2" stroke="#414141" stroke-width="0.8"/><path d="M105.1 50.8L407.5 63.4" stroke="#404040" stroke-width="1"/><path d="M313.6 15.7L273.0 101.8" stroke="#414141" stroke-width="0.8"/><path d="M101.5 53.1L407.8 66.0" stroke="#404040" stroke-width="1"/><path d="M320.3 15.9L283.5 102.3" stroke="#414141" stroke-width="0.8"/><path d="M97.9 55.5L408.1 68.8" stroke="#404040" stroke-width="1"/><path d="M327.0 16.1L294.0 102.8" stroke="#414141" stroke-width="0.8"/><path d="M94.2 58.0L408.5 71.6" stroke="#404040" stroke-width="1"/><path d="M333.7 16.3L304.5 103.4" stroke="#414141" stroke-width="0.8"/><path d="M90.3 60.5L408.8 74.5" stroke="#404040" stroke-width="1"/><path d="M340.4 16.5L315.1 103.9" stroke="#414141" stroke-width="0.8"/><path d="M86.4 63.1L409.2 77.5" stroke="#404040" stroke-width="1"/><path d="M347.2 16.8L325.8 104.5" stroke="#414141" stroke-width="0.8"/><path d="M82.3 65.8L409.6 80.6" stroke="#404040" stroke-width="1"/><path d="M354.0 17.0L336.5 105.0" stroke="#414141" stroke-width="0.8"/><path d="M78.2 68.5L409.9 83.8" stroke="#404040" stroke-width="1"/><path d="M360.8 17.2L347.3 105.6" stroke="#414141" stroke-width="0.8"/><path d="M73.9 71.3L410.3 87.1" stroke="#404040" stroke-width="1"/><path d="M367.6 17.4L358.1 106.2" stroke="#414141" stroke-width="0.8"/><path d="M69.5 74.2L410.7 90.4" stroke="#404040" stroke-width="1"/><path d="M374.4 17.6L369.0 106.7" stroke="#414141" stroke-width="0.8"/><path d="M65.0 77.2L411.2 93.9" stroke="#404040" stroke-width="1"/><path d="M381.3 17.8L379.9 107.3" stroke="#414141" stroke-width="0.8"/><path d="M60.3 80.2L411.6 97.5" stroke="#404040" stroke-width="1"/><path d="M388.2 18.1L390.9 107.9" stroke="#414141" stroke-width="0.8"/><path d="M55.5 83.4L412.1 101.2" stroke="#404040" stroke-width="1"/><path d="M395.1 18.3L401.9 108.4" stroke="#414141" stroke-width="0.8"/><path d="M50.6 86.6L412.5 105.0" stroke="#404040" stroke-width="1"/><path d="M402.0 18.5L413.0 109.0" stroke="#414141" stroke-width="0.8"/><path d="M45.5 90.0L413.0 109.0" stroke="#404040" stroke-width="1"/></svg><svg class="a" style="left:540px;top:280px;" width="250" height="210" viewBox="0 0 250 210"><defs><filter id="hb" x="-10%" y="-10%" width="120%" height="120%"><feGaussianBlur stdDeviation="0.8"/></filter><linearGradient id="hg" x1="0" y1="0" x2="0" y2="210" gradientUnits="userSpaceOnUse"><stop offset="0.5" stop-color="#fff"/><stop offset="0.62" stop-color="#bbb"/><stop offset="0.95" stop-color="#666"/></linearGradient><mask id="hm" maskUnits="userSpaceOnUse" x="0" y="0" width="250" height="210"><rect width="250" height="210" fill="url(#hg)"/></mask></defs><g filter="url(#hb)" mask="url(#hm)" fill="none" stroke-linejoin="round" stroke-linecap="round"><path d="M189.5 17.0 L235.6 40.1 L209.4 63.0 L205.2 62.7 L202.8 61.7 L199.8 60.6 L196.5 59.4 L193.0 58.1 L189.4 56.8 L185.7 55.6 L182.2 54.4 L178.7 53.2 L175.1 52.1 L171.3 50.9 L167.5 49.8 L163.6 48.6 L159.8 47.5 L156.0 46.4 L152.3 45.4 L148.7 44.4 L145.1 43.5 L141.6 42.5 L138.1 41.6 L134.6 40.7 L131.2 39.9 L127.8 39.2 L124.5 38.4 L121.2 37.7 L118.3 36.9 L115.4 36.2 L112.7 35.5 L109.9 35.0 L107.0 34.6 L103.8 34.4 L100.2 34.5 L95.9 34.9 L91.1 35.5 L85.9 36.4 L80.6 37.4 L75.2 38.6 L70.0 39.9 L65.1 41.1 L60.7 42.4 L56.7 43.6 L53.0 44.8 L49.4 46.1 L46.2 47.4 L43.2 48.7 L40.4 50.3 L37.9 51.9 L35.7 53.8 L33.7 56.0 L31.9 58.7 L30.2 61.7 L28.7 64.8 L27.4 67.9 L26.5 70.8 L25.8 73.3 L25.5 75.3 L25.4 76.5 L25.5 77.0 L25.6 77.1 L25.9 77.3 L26.7 77.7 L28.1 78.3 L29.9 79.2 L32.1 80.3 L34.7 81.6 L37.8 83.1 L41.3 84.6 L45.1 86.3 L49.1 88.0 L53.1 89.7 L57.1 91.4 L60.8 93.0 L64.5 94.6 L68.2 96.2 L72.0 97.8 L75.8 99.4 L79.5 100.9 L83.1 102.4 L86.5 103.9 L89.7 105.3 L92.7 106.5 L95.7 107.5 L98.6 108.4 L101.4 109.3 L104.1 110.3 L106.7 111.5 L109.1 113.0 L111.2 114.9 L113.0 117.0 L114.7 119.5 L116.1 122.1 L117.3 125.0 L118.3 127.9 L118.9 131.0 L119.1 134.1 L118.9 137.2 L118.2 140.4 L116.9 143.7 L115.3 147.1 L113.4 150.5 L111.3 153.8 L109.2 157.0 L107.0 160.0 L104.9 162.7 L102.7 165.1 L100.4 167.3 L97.9 169.4 L95.4 171.2 L93.0 173.0 L90.7 174.6 L88.5 176.1 L86.6 177.7 L84.8 179.1 L83.1 180.5 L81.5 181.8 L80.0 183.0 L78.7 184.1 L77.5 185.2 L76.5 186.3 L75.6 187.4 L74.9 188.5 L74.5 189.7 L74.2 191.0 L74.0 192.2 L73.9 193.4 L73.8 194.4 L73.7 195.4 L73.6 196.1" stroke="#8d846f" stroke-width="4" opacity="0.45"/><path d="M189.0 18.0 L233.5 41.0 L208.0 61.0 L206.1 60.3 L203.6 59.4 L200.7 58.3 L197.4 57.1 L193.8 55.8 L190.2 54.5 L186.5 53.2 L183.0 52.0 L179.5 50.9 L175.8 49.7 L172.0 48.5 L168.2 47.4 L164.3 46.2 L160.5 45.1 L156.7 44.0 L153.0 43.0 L149.4 42.0 L145.8 41.0 L142.2 40.1 L138.7 39.2 L135.2 38.3 L131.7 37.5 L128.3 36.7 L125.0 36.0 L121.8 35.3 L118.9 34.5 L116.1 33.8 L113.2 33.1 L110.3 32.5 L107.2 32.1 L103.8 31.9 L100.0 32.0 L95.6 32.4 L90.7 33.1 L85.5 33.9 L80.1 35.0 L74.6 36.2 L69.4 37.4 L64.4 38.7 L60.0 40.0 L56.0 41.2 L52.2 42.5 L48.6 43.7 L45.2 45.1 L42.0 46.5 L39.1 48.1 L36.4 49.9 L34.0 52.0 L31.8 54.5 L29.8 57.3 L27.9 60.5 L26.4 63.8 L25.1 67.0 L24.1 70.1 L23.4 72.8 L23.0 75.0 L22.9 76.6 L23.2 77.8 L23.7 78.7 L24.5 79.4 L25.6 80.0 L27.1 80.6 L28.9 81.4 L31.0 82.5 L33.6 83.8 L36.8 85.3 L40.3 86.8 L44.2 88.5 L48.2 90.1 L52.3 91.8 L56.2 93.4 L60.0 95.0 L63.7 96.5 L67.4 98.1 L71.2 99.7 L75.0 101.2 L78.7 102.7 L82.3 104.2 L85.8 105.6 L89.0 107.0 L92.1 108.2 L95.1 109.2 L98.1 110.1 L100.8 110.9 L103.5 111.9 L105.9 113.0 L108.1 114.3 L110.0 116.0 L111.7 118.0 L113.3 120.3 L114.7 122.8 L115.9 125.5 L116.8 128.3 L117.4 131.2 L117.7 134.1 L117.5 137.0 L116.8 140.0 L115.7 143.2 L114.2 146.5 L112.3 149.9 L110.3 153.2 L108.2 156.4 L106.0 159.3 L104.0 162.0 L101.9 164.4 L99.7 166.6 L97.3 168.6 L94.8 170.4 L92.4 172.2 L90.1 173.8 L87.9 175.4 L86.0 177.0 L84.2 178.5 L82.5 179.9 L81.0 181.2 L79.5 182.4 L78.2 183.5 L77.0 184.7 L75.9 185.8 L75.0 187.0 L74.3 188.2 L73.8 189.5 L73.5 190.8 L73.3 192.1 L73.2 193.3 L73.1 194.4 L73.1 195.3 L73.0 196.0" stroke="#8d846f" stroke-width="4" opacity="0.45"/><path d="M188.5 19.0 L231.4 41.9 L206.6 59.0 L207.0 58.0 L204.5 57.0 L201.5 55.9 L198.2 54.7 L194.7 53.4 L191.0 52.1 L187.3 50.8 L183.8 49.6 L180.2 48.5 L176.5 47.3 L172.8 46.1 L168.9 45.0 L165.0 43.8 L161.2 42.7 L157.4 41.6 L153.7 40.6 L150.0 39.6 L146.4 38.6 L142.9 37.7 L139.3 36.8 L135.8 35.9 L132.3 35.1 L128.9 34.3 L125.5 33.6 L122.4 32.8 L119.5 32.1 L116.7 31.3 L113.8 30.6 L110.7 30.0 L107.5 29.6 L103.9 29.4 L99.8 29.5 L95.3 29.9 L90.3 30.6 L85.0 31.5 L79.6 32.6 L74.1 33.7 L68.8 35.0 L63.8 36.3 L59.3 37.6 L55.2 38.8 L51.4 40.1 L47.7 41.4 L44.2 42.8 L40.9 44.3 L37.8 46.0 L34.9 48.0 L32.3 50.2 L29.8 52.9 L27.6 56.0 L25.7 59.3 L24.1 62.8 L22.7 66.2 L21.7 69.4 L20.9 72.3 L20.5 74.7 L20.5 76.8 L20.8 78.7 L21.8 80.3 L23.1 81.5 L24.6 82.3 L26.1 82.9 L27.8 83.7 L29.9 84.7 L32.5 86.1 L35.8 87.5 L39.4 89.0 L43.3 90.6 L47.3 92.3 L51.4 93.9 L55.4 95.5 L59.2 97.0 L62.9 98.5 L66.6 100.0 L70.4 101.6 L74.2 103.1 L78.0 104.6 L81.6 106.0 L85.0 107.4 L88.3 108.7 L91.5 109.9 L94.6 110.9 L97.5 111.8 L100.3 112.6 L102.8 113.5 L105.1 114.5 L107.1 115.7 L108.8 117.1 L110.5 119.0 L112.0 121.1 L113.3 123.5 L114.5 126.0 L115.4 128.7 L116.0 131.4 L116.2 134.1 L116.1 136.8 L115.5 139.6 L114.5 142.7 L113.0 145.9 L111.3 149.2 L109.3 152.5 L107.2 155.7 L105.1 158.6 L103.1 161.3 L101.1 163.6 L99.0 165.8 L96.6 167.8 L94.3 169.7 L91.9 171.4 L89.6 173.1 L87.4 174.7 L85.4 176.3 L83.7 177.8 L82.0 179.2 L80.5 180.5 L79.0 181.8 L77.6 183.0 L76.4 184.2 L75.3 185.4 L74.4 186.6 L73.7 187.9 L73.2 189.3 L72.8 190.7 L72.7 192.0 L72.6 193.3 L72.5 194.4 L72.5 195.3 L72.4 195.9" stroke="#8d846f" stroke-width="4" opacity="0.45"/><path d="M189.8 16.4 L236.9 39.5 L210.3 64.3 L204.7 64.1 L202.2 63.1 L199.3 62.0 L196.0 60.8 L192.5 59.5 L188.9 58.2 L185.2 57.0 L181.7 55.8 L178.3 54.7 L174.6 53.5 L170.9 52.4 L167.0 51.2 L163.2 50.1 L159.4 49.0 L155.6 47.9 L151.9 46.9 L148.3 45.9 L144.8 44.9 L141.2 44.0 L137.7 43.1 L134.2 42.2 L130.8 41.4 L127.5 40.6 L124.1 39.9 L120.9 39.2 L117.9 38.4 L115.1 37.6 L112.4 37.0 L109.7 36.4 L106.9 36.1 L103.8 35.9 L100.2 36.0 L96.1 36.4 L91.3 37.0 L86.2 37.9 L80.9 38.9 L75.5 40.1 L70.3 41.3 L65.5 42.6 L61.1 43.8 L57.2 45.0 L53.4 46.3 L50.0 47.5 L46.8 48.7 L43.8 50.1 L41.2 51.5 L38.8 53.1 L36.8 54.9 L34.9 56.9 L33.1 59.5 L31.5 62.4 L30.0 65.4 L28.8 68.4 L27.9 71.2 L27.3 73.6 L27.0 75.4 L26.9 76.4 L26.9 76.5 L26.7 76.1 L26.7 76.1 L27.3 76.4 L28.7 77.0 L30.6 77.8 L32.8 78.9 L35.3 80.3 L38.4 81.7 L41.8 83.3 L45.6 85.0 L49.6 86.7 L53.6 88.4 L57.6 90.1 L61.3 91.8 L65.0 93.4 L68.7 95.0 L72.5 96.6 L76.2 98.2 L79.9 99.8 L83.5 101.4 L86.9 102.8 L90.1 104.2 L93.1 105.4 L96.0 106.4 L98.9 107.4 L101.7 108.3 L104.5 109.3 L107.1 110.6 L109.6 112.2 L111.9 114.2 L113.8 116.5 L115.5 119.0 L116.9 121.7 L118.2 124.6 L119.1 127.7 L119.7 130.9 L119.9 134.1 L119.7 137.3 L118.9 140.6 L117.7 144.0 L116.0 147.5 L114.1 150.9 L112.0 154.2 L109.7 157.4 L107.5 160.4 L105.4 163.1 L103.2 165.6 L100.8 167.8 L98.3 169.8 L95.8 171.7 L93.3 173.4 L91.0 175.0 L88.8 176.6 L86.9 178.1 L85.1 179.5 L83.4 180.9 L81.8 182.2 L80.3 183.3 L79.0 184.5 L77.8 185.5 L76.8 186.6 L76.0 187.6 L75.3 188.7 L74.9 189.9 L74.6 191.1 L74.4 192.3 L74.2 193.4 L74.2 194.5 L74.1 195.4 L74.0 196.1" stroke="#b0a68c" stroke-width="1.5" opacity="0.6"/><path d="M189.5 17.0 L235.6 40.1 L209.4 63.0 L205.2 62.7 L202.8 61.7 L199.8 60.6 L196.5 59.4 L193.0 58.1 L189.4 56.8 L185.7 55.6 L182.2 54.4 L178.7 53.2 L175.1 52.1 L171.3 50.9 L167.5 49.8 L163.6 48.6 L159.8 47.5 L156.0 46.4 L152.3 45.4 L148.7 44.4 L145.1 43.5 L141.6 42.5 L138.1 41.6 L134.6 40.7 L131.2 39.9 L127.8 39.2 L124.5 38.4 L121.2 37.7 L118.3 36.9 L115.4 36.2 L112.7 35.5 L109.9 35.0 L107.0 34.6 L103.8 34.4 L100.2 34.5 L95.9 34.9 L91.1 35.5 L85.9 36.4 L80.6 37.4 L75.2 38.6 L70.0 39.9 L65.1 41.1 L60.7 42.4 L56.7 43.6 L53.0 44.8 L49.4 46.1 L46.2 47.4 L43.2 48.7 L40.4 50.3 L37.9 51.9 L35.7 53.8 L33.7 56.0 L31.9 58.7 L30.2 61.7 L28.7 64.8 L27.4 67.9 L26.5 70.8 L25.8 73.3 L25.5 75.3 L25.4 76.5 L25.5 77.0 L25.6 77.1 L25.9 77.3 L26.7 77.7 L28.1 78.3 L29.9 79.2 L32.1 80.3 L34.7 81.6 L37.8 83.1 L41.3 84.6 L45.1 86.3 L49.1 88.0 L53.1 89.7 L57.1 91.4 L60.8 93.0 L64.5 94.6 L68.2 96.2 L72.0 97.8 L75.8 99.4 L79.5 100.9 L83.1 102.4 L86.5 103.9 L89.7 105.3 L92.7 106.5 L95.7 107.5 L98.6 108.4 L101.4 109.3 L104.1 110.3 L106.7 111.5 L109.1 113.0 L111.2 114.9 L113.0 117.0 L114.7 119.5 L116.1 122.1 L117.3 125.0 L118.3 127.9 L118.9 131.0 L119.1 134.1 L118.9 137.2 L118.2 140.4 L116.9 143.7 L115.3 147.1 L113.4 150.5 L111.3 153.8 L109.2 157.0 L107.0 160.0 L104.9 162.7 L102.7 165.1 L100.4 167.3 L97.9 169.4 L95.4 171.2 L93.0 173.0 L90.7 174.6 L88.5 176.1 L86.6 177.7 L84.8 179.1 L83.1 180.5 L81.5 181.8 L80.0 183.0 L78.7 184.1 L77.5 185.2 L76.5 186.3 L75.6 187.4 L74.9 188.5 L74.5 189.7 L74.2 191.0 L74.0 192.2 L73.9 193.4 L73.8 194.4 L73.7 195.4 L73.6 196.1" stroke="#c0b69e" stroke-width="1.5" opacity="0.7"/><path d="M189.2 17.6 L234.3 40.6 L208.6 61.8 L205.8 61.2 L203.3 60.3 L200.3 59.2 L197.0 58.0 L193.5 56.7 L189.9 55.4 L186.2 54.1 L182.7 52.9 L179.2 51.8 L175.5 50.7 L171.7 49.5 L167.9 48.3 L164.0 47.2 L160.2 46.1 L156.4 45.0 L152.7 44.0 L149.1 43.0 L145.5 42.0 L142.0 41.1 L138.4 40.2 L135.0 39.3 L131.5 38.5 L128.1 37.7 L124.8 37.0 L121.6 36.2 L118.6 35.5 L115.8 34.7 L113.0 34.0 L110.2 33.5 L107.1 33.1 L103.8 32.9 L100.1 33.0 L95.7 33.4 L90.9 34.1 L85.7 34.9 L80.3 36.0 L74.9 37.2 L69.6 38.4 L64.7 39.7 L60.3 41.0 L56.3 42.2 L52.5 43.4 L48.9 44.7 L45.6 46.0 L42.5 47.4 L39.6 49.0 L37.0 50.7 L34.7 52.7 L32.6 55.1 L30.6 57.9 L28.8 61.0 L27.3 64.2 L26.0 67.4 L25.0 70.4 L24.3 73.0 L24.0 75.1 L23.9 76.6 L24.1 77.5 L24.4 78.1 L25.0 78.6 L26.1 79.1 L27.5 79.7 L29.3 80.5 L31.5 81.6 L34.0 82.9 L37.2 84.4 L40.7 86.0 L44.6 87.6 L48.6 89.3 L52.6 91.0 L56.6 92.6 L60.3 94.2 L64.0 95.8 L67.8 97.3 L71.5 98.9 L75.3 100.5 L79.0 102.0 L82.6 103.5 L86.0 104.9 L89.3 106.3 L92.3 107.5 L95.3 108.5 L98.3 109.4 L101.1 110.3 L103.7 111.2 L106.2 112.4 L108.5 113.8 L110.5 115.5 L112.2 117.6 L113.9 120.0 L115.3 122.5 L116.5 125.3 L117.4 128.2 L118.0 131.1 L118.2 134.1 L118.1 137.1 L117.4 140.2 L116.2 143.4 L114.6 146.8 L112.8 150.1 L110.7 153.4 L108.6 156.6 L106.4 159.6 L104.3 162.3 L102.2 164.7 L99.9 166.9 L97.5 168.9 L95.1 170.8 L92.7 172.5 L90.3 174.1 L88.2 175.7 L86.2 177.3 L84.4 178.8 L82.8 180.1 L81.2 181.4 L79.7 182.6 L78.4 183.8 L77.2 184.9 L76.1 186.0 L75.2 187.2 L74.6 188.4 L74.1 189.6 L73.8 190.9 L73.6 192.2 L73.5 193.3 L73.4 194.4 L73.3 195.3 L73.2 196.0" stroke="#c8bea8" stroke-width="1.5" opacity="0.75"/><path d="M188.9 18.2 L233.1 41.2 L207.7 60.6 L206.3 59.8 L203.8 58.9 L200.8 57.8 L197.5 56.6 L194.0 55.3 L190.4 54.0 L186.7 52.7 L183.2 51.5 L179.6 50.4 L176.0 49.2 L172.2 48.1 L168.3 46.9 L164.5 45.7 L160.6 44.6 L156.8 43.5 L153.1 42.5 L149.5 41.5 L145.9 40.6 L142.3 39.6 L138.8 38.7 L135.3 37.8 L131.9 37.0 L128.5 36.2 L125.1 35.5 L122.0 34.8 L119.0 34.0 L116.2 33.3 L113.4 32.6 L110.4 32.0 L107.3 31.6 L103.8 31.4 L100.0 31.5 L95.6 31.9 L90.7 32.6 L85.4 33.5 L80.0 34.5 L74.5 35.7 L69.2 37.0 L64.3 38.2 L59.9 39.5 L55.8 40.8 L52.0 42.0 L48.4 43.3 L45.0 44.6 L41.8 46.1 L38.9 47.7 L36.1 49.5 L33.7 51.6 L31.4 54.1 L29.3 57.1 L27.5 60.3 L25.9 63.6 L24.6 66.9 L23.6 69.9 L22.9 72.7 L22.5 74.9 L22.4 76.7 L22.7 78.0 L23.3 79.1 L24.2 79.8 L25.4 80.5 L26.9 81.1 L28.7 81.9 L30.8 82.9 L33.4 84.3 L36.6 85.7 L40.1 87.3 L44.0 88.9 L48.0 90.6 L52.1 92.2 L56.1 93.8 L59.8 95.4 L63.5 96.9 L67.3 98.5 L71.1 100.0 L74.8 101.6 L78.6 103.1 L82.2 104.6 L85.6 106.0 L88.9 107.3 L92.0 108.5 L95.0 109.5 L98.0 110.4 L100.7 111.3 L103.3 112.2 L105.7 113.3 L107.9 114.6 L109.8 116.2 L111.5 118.2 L113.0 120.5 L114.4 123.0 L115.6 125.6 L116.5 128.4 L117.1 131.2 L117.4 134.1 L117.2 137.0 L116.6 139.9 L115.5 143.1 L113.9 146.4 L112.1 149.7 L110.1 153.1 L108.0 156.2 L105.9 159.2 L103.8 161.9 L101.8 164.2 L99.5 166.4 L97.1 168.4 L94.7 170.3 L92.3 172.0 L90.0 173.7 L87.8 175.3 L85.9 176.9 L84.1 178.4 L82.4 179.7 L80.9 181.0 L79.4 182.3 L78.1 183.4 L76.8 184.6 L75.8 185.7 L74.9 186.9 L74.2 188.2 L73.7 189.5 L73.4 190.8 L73.2 192.1 L73.1 193.3 L73.0 194.4 L73.0 195.3 L72.9 196.0" stroke="#bdb29a" stroke-width="1.5" opacity="0.75"/><path d="M188.6 18.8 L231.8 41.7 L206.8 59.4 L206.8 58.4 L204.3 57.5 L201.4 56.4 L198.1 55.2 L194.5 53.9 L190.9 52.6 L187.2 51.3 L183.6 50.1 L180.1 49.0 L176.4 47.8 L172.6 46.6 L168.8 45.5 L164.9 44.3 L161.0 43.2 L157.2 42.1 L153.5 41.1 L149.9 40.1 L146.3 39.1 L142.7 38.2 L139.2 37.2 L135.7 36.4 L132.2 35.5 L128.8 34.8 L125.4 34.0 L122.3 33.3 L119.4 32.6 L116.6 31.8 L113.7 31.1 L110.7 30.5 L107.4 30.1 L103.8 29.9 L99.9 30.0 L95.4 30.4 L90.4 31.1 L85.1 32.0 L79.7 33.0 L74.2 34.2 L68.9 35.5 L63.9 36.8 L59.4 38.1 L55.4 39.3 L51.5 40.6 L47.9 41.8 L44.4 43.2 L41.1 44.7 L38.1 46.4 L35.2 48.4 L32.6 50.6 L30.2 53.2 L28.1 56.3 L26.2 59.6 L24.5 63.0 L23.2 66.3 L22.1 69.5 L21.4 72.4 L21.0 74.8 L21.0 76.8 L21.3 78.5 L22.2 80.0 L23.4 81.1 L24.8 81.8 L26.3 82.5 L28.0 83.2 L30.1 84.3 L32.8 85.6 L36.0 87.1 L39.6 88.6 L43.5 90.2 L47.5 91.8 L51.6 93.5 L55.6 95.1 L59.3 96.6 L63.0 98.1 L66.8 99.7 L70.6 101.2 L74.4 102.7 L78.1 104.2 L81.7 105.7 L85.2 107.0 L88.4 108.4 L91.6 109.6 L94.7 110.6 L97.6 111.4 L100.4 112.3 L103.0 113.1 L105.3 114.2 L107.3 115.4 L109.1 116.9 L110.7 118.8 L112.2 121.0 L113.6 123.4 L114.8 125.9 L115.7 128.6 L116.3 131.4 L116.5 134.1 L116.4 136.8 L115.8 139.7 L114.7 142.8 L113.2 146.1 L111.5 149.4 L109.5 152.7 L107.4 155.8 L105.3 158.8 L103.3 161.4 L101.3 163.8 L99.1 166.0 L96.8 167.9 L94.4 169.8 L92.0 171.6 L89.7 173.2 L87.5 174.9 L85.6 176.5 L83.8 178.0 L82.1 179.4 L80.6 180.7 L79.1 181.9 L77.7 183.1 L76.5 184.3 L75.4 185.5 L74.5 186.7 L73.8 188.0 L73.3 189.4 L73.0 190.7 L72.8 192.1 L72.7 193.3 L72.6 194.4 L72.6 195.3 L72.5 195.9" stroke="#c6bca6" stroke-width="1.5" opacity="0.7"/><path d="M188.3 19.4 L230.6 42.3 L206.0 58.1 L207.3 57.0 L204.8 56.1 L201.9 55.0 L198.6 53.8 L195.0 52.5 L191.4 51.2 L187.7 49.9 L184.1 48.7 L180.5 47.5 L176.8 46.4 L173.1 45.2 L169.2 44.0 L165.3 42.9 L161.4 41.7 L157.6 40.7 L153.9 39.6 L150.3 38.6 L146.7 37.7 L143.1 36.7 L139.5 35.8 L136.0 34.9 L132.5 34.1 L129.1 33.3 L125.8 32.6 L122.7 31.9 L119.8 31.1 L116.9 30.4 L114.0 29.6 L110.9 29.0 L107.5 28.6 L103.9 28.4 L99.8 28.5 L95.2 28.9 L90.2 29.6 L84.9 30.5 L79.4 31.6 L73.9 32.8 L68.5 34.0 L63.5 35.4 L59.0 36.6 L54.9 37.9 L51.0 39.1 L47.3 40.4 L43.8 41.8 L40.5 43.4 L37.3 45.1 L34.3 47.2 L31.6 49.5 L29.0 52.3 L26.8 55.5 L24.8 58.9 L23.2 62.4 L21.8 65.8 L20.7 69.1 L19.9 72.1 L19.5 74.6 L19.5 76.9 L19.9 79.0 L21.0 81.0 L22.6 82.3 L24.1 83.2 L25.7 83.8 L27.4 84.6 L29.4 85.6 L32.1 86.9 L35.4 88.4 L39.0 89.9 L42.9 91.5 L47.0 93.1 L51.1 94.7 L55.0 96.3 L58.8 97.8 L62.5 99.3 L66.3 100.8 L70.1 102.3 L73.9 103.8 L77.7 105.3 L81.3 106.7 L84.7 108.1 L88.0 109.4 L91.2 110.6 L94.4 111.6 L97.3 112.4 L100.1 113.2 L102.6 114.1 L104.8 115.1 L106.7 116.2 L108.4 117.6 L109.9 119.4 L111.4 121.5 L112.8 123.8 L113.9 126.3 L114.8 128.8 L115.4 131.5 L115.7 134.1 L115.6 136.7 L115.0 139.5 L114.0 142.5 L112.6 145.7 L110.8 149.0 L108.9 152.3 L106.8 155.4 L104.8 158.4 L102.8 161.0 L100.8 163.3 L98.7 165.5 L96.4 167.5 L94.0 169.3 L91.7 171.1 L89.4 172.8 L87.2 174.4 L85.2 176.1 L83.5 177.6 L81.8 179.0 L80.3 180.3 L78.8 181.5 L77.4 182.7 L76.2 183.9 L75.1 185.2 L74.2 186.4 L73.4 187.8 L72.9 189.2 L72.6 190.7 L72.4 192.0 L72.3 193.3 L72.3 194.4 L72.2 195.2 L72.1 195.9" stroke="#aea48a" stroke-width="1.5" opacity="0.6"/><path d="M188.6 18.8 L231.8 41.7 L206.8 59.4 L206.8 58.4 L204.3 57.5 L201.4 56.4 L198.1 55.2 L194.5 53.9 L190.9 52.6 L187.2 51.3 L183.6 50.1 L180.1 49.0 L176.4 47.8 L172.6 46.6 L168.8 45.5 L164.9 44.3 L161.0 43.2 L157.2 42.1 L153.5 41.1 L149.9 40.1 L146.3 39.1 L142.7 38.2 L139.2 37.2 L135.7 36.4 L132.2 35.5 L128.8 34.8 L125.4 34.0 L122.3 33.3 L119.4 32.6 L116.6 31.8 L113.7 31.1 L110.7 30.5 L107.4 30.1 L103.8 29.9 L99.9 30.0 L95.4 30.4 L90.4 31.1 L85.1 32.0 L79.7 33.0 L74.2 34.2 L68.9 35.5 L63.9 36.8 L59.4 38.1 L55.4 39.3 L51.5 40.6 L47.9 41.8 L44.4 43.2 L41.1 44.7 L38.1 46.4 L35.2 48.4 L32.6 50.6 L30.2 53.2 L28.1 56.3 L26.2 59.6 L24.5 63.0 L23.2 66.3 L22.1 69.5 L21.4 72.4 L21.0 74.8 L21.0 76.8 L21.3 78.5 L22.2 80.0 L23.4 81.1 L24.8 81.8 L26.3 82.5 L28.0 83.2 L30.1 84.3 L32.8 85.6 L36.0 87.1 L39.6 88.6 L43.5 90.2 L47.5 91.8 L51.6 93.5 L55.6 95.1 L59.3 96.6 L63.0 98.1 L66.8 99.7 L70.6 101.2 L74.4 102.7 L78.1 104.2 L81.7 105.7 L85.2 107.0 L88.4 108.4 L91.6 109.6 L94.7 110.6 L97.6 111.4 L100.4 112.3 L103.0 113.1 L105.3 114.2 L107.3 115.4 L109.1 116.9 L110.7 118.8 L112.2 121.0 L113.6 123.4 L114.8 125.9 L115.7 128.6 L116.3 131.4 L116.5 134.1 L116.4 136.8 L115.8 139.7 L114.7 142.8 L113.2 146.1 L111.5 149.4 L109.5 152.7 L107.4 155.8 L105.3 158.8 L103.3 161.4 L101.3 163.8 L99.1 166.0 L96.8 167.9 L94.4 169.8 L92.0 171.6 L89.7 173.2 L87.5 174.9 L85.6 176.5 L83.8 178.0 L82.1 179.4 L80.6 180.7 L79.1 181.9 L77.7 183.1 L76.5 184.3 L75.4 185.5 L74.5 186.7 L73.8 188.0 L73.3 189.4 L73.0 190.7 L72.8 192.1 L72.7 193.3 L72.6 194.4 L72.6 195.3 L72.5 195.9" stroke="#b060c0" stroke-width="1.4" opacity="0.5"/></g><circle cx="128" cy="106" r="3" fill="#d83030"/><ellipse cx="75" cy="186" rx="3.5" ry="5" fill="#c040c0" opacity="0.75" filter="url(#hb)"/></svg><div class="a" style="left:962px;top:95px;width:306px;height:537px;background:#444;"></div><div class="a" style="left:961px;top:95px;width:3px;height:537px;background:#3a3a3a;"></div><div class="t" style="left:970px;top:100.74px;font-size:8.0px;color:#cfcfcf;">List</div><div class="t" style="left:992px;top:100.74px;font-size:8.0px;color:#cfcfcf;">Selected</div><div class="t" style="left:1030px;top:100.74px;font-size:8.0px;color:#cfcfcf;">Focus</div><div class="t" style="left:1060px;top:100.74px;font-size:8.0px;color:#cfcfcf;">Attributes</div><div class="t" style="left:1104px;top:100.74px;font-size:8.0px;color:#cfcfcf;">Show</div><div class="t" style="left:1134px;top:100.74px;font-size:8.0px;color:#cfcfcf;">Help</div><div class="a" style="left:968px;top:121px;width:297px;height:12px;background:#3a3a3a;"></div><div class="a" style="left:1025px;top:121px;width:78px;height:12px;background:#454545;"></div><div class="t" style="left:976px;top:123.74px;font-size:8.0px;color:#aaa;">hairSystem1</div><div class="t" style="left:1033px;top:123.74px;font-size:8.0px;color:#eee;">hairSystemShape1</div><div class="t" style="left:1111px;top:123.74px;font-size:8.0px;color:#aaa;">pfxHairShape1</div><div class="t" style="left:1177px;top:123.74px;font-size:8.0px;color:#aaa;">nucleus1</div><div class="t" style="left:1224px;top:123.74px;font-size:8.0px;color:#aaa;">time1</div><div class="t" style="right:216px;top:157.24px;font-size:8.0px;color:#cfcfcf;">hairSystem:</div><div class="a" style="left:1069px;top:153px;width:102px;height:15px;background:#2b2b2b;"></div><div class="t" style="left:1072px;top:157.24px;font-size:8.0px;color:#ddd;">hairSystemShape1</div><svg class="a" style="left:1180px;top:146px;" width="12" height="10" viewBox="0 0 12 10"><rect x="2.5" y="0.5" width="9" height="9" fill="none" stroke="#ccc"/><path d="M0 5h4" stroke="#ddd" stroke-width="2"/></svg><svg class="a" style="left:1180px;top:163px;" width="12" height="10" viewBox="0 0 12 10"><rect x="0.5" y="0.5" width="9" height="9" fill="none" stroke="#ccc"/><path d="M8 5h4" stroke="#ddd" stroke-width="2"/></svg><div class="a" style="left:1199px;top:139px;width:47px;height:14px;background:#575757;"></div><div class="a" style="left:1199px;top:154px;width:47px;height:14px;background:#575757;"></div><div class="a" style="left:1199px;top:168px;width:23px;height:14px;background:#575757;"></div><div class="a" style="left:1223px;top:168px;width:23px;height:14px;background:#575757;"></div><div class="t" style="left:1212px;top:142.74px;font-size:8.0px;color:#e0e0e0;">Focus</div><div class="t" style="left:1209px;top:157.24px;font-size:8.0px;color:#e0e0e0;">Presets</div><div class="t" style="left:1200px;top:171.74px;font-size:8.0px;color:#e0e0e0;">Show</div><div class="t" style="left:1226px;top:171.74px;font-size:8.0px;color:#e0e0e0;">Hide</div><div class="t" style="right:215px;top:196.74px;font-size:8.0px;color:#cfcfcf;">Simulation Method</div><div class="a" style="left:1071px;top:194px;width:105px;height:12px;background:#525252;"></div><div class="t" style="left:1074px;top:196.74px;font-size:8.0px;color:#ddd;">All Follicles</div><svg class="a" style="left:1166px;top:198px;" width="7" height="4" viewBox="0 0 7 4"><path d="M0 0h7L3.5 4z" fill="#ddd"/></svg><div class="t" style="right:215px;top:211.24px;font-size:8.0px;color:#cfcfcf;">Display Quality</div><div class="a" style="left:1071px;top:209px;width:45px;height:11px;background:#2b2b2b;"></div><div class="t" style="left:1073px;top:211.24px;font-size:8.0px;color:#ddd;">100.000</div><div class="a" style="left:1120px;top:213px;width:130px;height:3px;background:#2b2b2b;"></div><div class="a" style="left:1246px;top:209px;width:6px;height:11px;background:#cfcfcf;"></div><svg class="a" style="left:1071px;top:223px;" width="9" height="9" viewBox="0 0 9 9"><path d="M1.5 4.5l2.5 3 4-6" stroke="#fff" stroke-width="1.6" fill="none"/></svg><div class="t" style="left:1083px;top:224.74px;font-size:8.0px;color:#ddd;">Use Nucleus Solver</div><div class="a" style="left:971px;top:235px;width:284px;height:13px;background:#5d5d5d;"></div><svg class="a" style="left:976px;top:239px;" width="9" height="5" viewBox="0 0 9 5"><path d="M0 0h9L4.5 5z" fill="#eee"/></svg><div class="t" style="left:993px;top:238.74px;font-size:8.0px;color:#e6e6e6;">Clump and Hair Shape</div><div class="t" style="right:212px;top:253.74px;font-size:8.0px;color:#cfcfcf;">Hairs Per Clump</div><div class="a" style="left:1074px;top:252px;width:45px;height:12px;background:#2b2b2b;"></div><div class="t" style="left:1077px;top:253.74px;font-size:8.0px;color:#ddd;">14</div><div class="a" style="left:1120px;top:256px;width:130px;height:3px;background:#2b2b2b;"></div><div class="a" style="left:1138px;top:252px;width:5px;height:12px;background:#cfcfcf;"></div><div class="t" style="right:212px;top:283.74px;font-size:8.0px;color:#cfcfcf;">Sub Segments</div><div class="a" style="left:1074px;top:282px;width:45px;height:12px;background:#2b2b2b;"></div><div class="t" style="left:1077px;top:283.74px;font-size:8.0px;color:#ddd;">0</div><div class="a" style="left:1120px;top:286px;width:130px;height:3px;background:#2b2b2b;"></div><div class="a" style="left:1122px;top:282px;width:5px;height:12px;background:#cfcfcf;"></div><div class="t" style="right:212px;top:298.24px;font-size:8.0px;color:#cfcfcf;">Thinning</div><div class="a" style="left:1074px;top:296px;width:45px;height:12px;background:#2b2b2b;"></div><div class="t" style="left:1077px;top:298.24px;font-size:8.0px;color:#ddd;">0.000</div><div class="a" style="left:1120px;top:301px;width:130px;height:3px;background:#2b2b2b;"></div><div class="a" style="left:1122px;top:296px;width:5px;height:12px;background:#cfcfcf;"></div><div class="t" style="right:212px;top:313.24px;font-size:8.0px;color:#cfcfcf;">Clump Twist</div><div class="a" style="left:1074px;top:311px;width:45px;height:12px;background:#2b2b2b;"></div><div class="t" style="left:1077px;top:313.24px;font-size:8.0px;color:#ddd;">0.000</div><div class="a" style="left:1120px;top:316px;width:130px;height:3px;background:#2b2b2b;"></div><div class="a" style="left:1183px;top:311px;width:5px;height:12px;background:#cfcfcf;"></div><div class="t" style="right:212px;top:328.24px;font-size:8.0px;color:#cfcfcf;">Bend Follow</div><div class="a" style="left:1074px;top:326px;width:45px;height:12px;background:#2b2b2b;"></div><div class="t" style="left:1077px;top:328.24px;font-size:8.0px;color:#ddd;">1.000</div><div class="a" style="left:1120px;top:331px;width:130px;height:3px;background:#2b2b2b;"></div><div class="a" style="left:1244px;top:326px;width:5px;height:12px;background:#cfcfcf;"></div><div class="t" style="right:212px;top:342.74px;font-size:8.0px;color:#cfcfcf;">Clump Width</div><div class="a" style="left:1074px;top:340px;width:45px;height:12px;background:#2b2b2b;"></div><div class="t" style="left:1077px;top:342.74px;font-size:8.0px;color:#ddd;">0.879</div><div class="a" style="left:1120px;top:346px;width:130px;height:3px;background:#2b2b2b;"></div><div class="a" style="left:1228px;top:340px;width:5px;height:12px;background:#cfcfcf;"></div><div class="t" style="right:212px;top:357.24px;font-size:8.0px;color:#cfcfcf;">Hair Width</div><div class="a" style="left:1074px;top:355px;width:45px;height:12px;background:#2b2b2b;"></div><div class="t" style="left:1077px;top:357.24px;font-size:8.0px;color:#ddd;">0.010</div><div class="a" style="left:1120px;top:360px;width:130px;height:3px;background:#2b2b2b;"></div><div class="a" style="left:1134px;top:355px;width:5px;height:12px;background:#cfcfcf;"></div><div class="t" style="right:212px;top:268.74px;font-size:8.0px;color:#cfcfcf;">Baldness Map</div><div class="a" style="left:1074px;top:267px;width:155px;height:11px;background:#2b2b2b;"></div><svg class="a" style="left:1234px;top:268px;" width="10" height="10" viewBox="0 0 10 10"><rect width="10" height="10" fill="#fff"/><rect x="0" y="0" width="5" height="5" fill="#000"/><rect x="5" y="5" width="5" height="5" fill="#000"/></svg><div class="a" style="left:975px;top:369px;width:277px;height:13px;background:#5d5d5d;"></div><svg class="a" style="left:980px;top:373px;" width="9" height="5" viewBox="0 0 9 5"><path d="M0 0h9L4.5 5z" fill="#eee"/></svg><div class="t" style="left:996px;top:372.74px;font-size:8.0px;color:#e6e6e6;">Clump Width Scale</div><div class="a" style="left:975px;top:437px;width:277px;height:13px;background:#5d5d5d;"></div><svg class="a" style="left:980px;top:441px;" width="9" height="5" viewBox="0 0 9 5"><path d="M0 0h9L4.5 5z" fill="#eee"/></svg><div class="t" style="left:996px;top:440.74px;font-size:8.0px;color:#e6e6e6;">Hair Width Scale</div><div class="a" style="left:975px;top:505px;width:277px;height:13px;background:#5d5d5d;"></div><svg class="a" style="left:980px;top:509px;" width="9" height="5" viewBox="0 0 9 5"><path d="M0 0h9L4.5 5z" fill="#eee"/></svg><div class="t" style="left:996px;top:508.74px;font-size:8.0px;color:#e6e6e6;">Clump Curl</div><div class="t" style="right:223px;top:389.24px;font-size:8.0px;color:#cfcfcf;">Selected Position</div><div class="a" style="left:1063px;top:387px;width:44px;height:12px;background:#2b2b2b;"></div><div class="t" style="left:1065px;top:389.24px;font-size:8.0px;color:#ddd;">1.000</div><div class="t" style="right:223px;top:404.24px;font-size:8.0px;color:#cfcfcf;">Selected Value</div><div class="a" style="left:1063px;top:402px;width:44px;height:12px;background:#2b2b2b;"></div><div class="t" style="left:1065px;top:404.24px;font-size:8.0px;color:#ddd;">0.200</div><div class="t" style="right:223px;top:418.74px;font-size:8.0px;color:#cfcfcf;">Interpolation</div><div class="a" style="left:1063px;top:416px;width:55px;height:12px;background:#525252;"></div><div class="t" style="left:1065px;top:418.74px;font-size:8.0px;color:#ddd;">Spline</div><svg class="a" style="left:1108px;top:420px;" width="7" height="4" viewBox="0 0 7 4"><path d="M0 0h7L3.5 4z" fill="#ddd"/></svg><div class="a" style="left:1123px;top:383px;width:94px;height:49px;background:#3e3e3e;"></div><div class="a" style="left:1220px;top:386px;width:16px;height:48px;background:#4b4b4b;"></div><svg class="a" style="left:1225px;top:407px;" width="6" height="6" viewBox="0 0 6 6"><path d="M0 0l6 3-6 3 1.5-3z" fill="#ccc"/></svg><svg class="a" style="left:1131px;top:386px;" width="80" height="36" viewBox="0 0 80 36"><rect x="0.5" y="0.5" width="79" height="35" fill="#7e7e7e" stroke="#262626"/><path d="M1 1 C30 8 50 22 78 28 L79 1 L1 1z" fill="#9c9c9c"/><path d="M1 1 C30 8 50 22 78 28" fill="none" stroke="#2a2a2a" stroke-width="1.2"/><circle cx="77.5" cy="28" r="2.2" fill="#888" stroke="#eee" stroke-width="1"/><circle cx="2" cy="1.5" r="1.5" fill="#333"/></svg><svg class="a" style="left:1129px;top:422px;" width="6" height="6" viewBox="0 0 6 6"><circle cx="3" cy="3" r="2.3" fill="#ddd" stroke="#222"/></svg><svg class="a" style="left:1205px;top:421px;" width="8" height="8" viewBox="0 0 8 8"><rect x="0.5" y="0.5" width="7" height="7" fill="#bbb" stroke="#333"/></svg><div class="t" style="right:223px;top:457.24px;font-size:8.0px;color:#cfcfcf;">Selected Position</div><div class="a" style="left:1063px;top:455px;width:44px;height:12px;background:#2b2b2b;"></div><div class="t" style="left:1065px;top:457.24px;font-size:8.0px;color:#ddd;">0.800</div><div class="t" style="right:223px;top:472.24px;font-size:8.0px;color:#cfcfcf;">Selected Value</div><div class="a" style="left:1063px;top:470px;width:44px;height:12px;background:#2b2b2b;"></div><div class="t" style="left:1065px;top:472.24px;font-size:8.0px;color:#ddd;">1.000</div><div class="t" style="right:223px;top:486.24px;font-size:8.0px;color:#cfcfcf;">Interpolation</div><div class="a" style="left:1063px;top:484px;width:55px;height:12px;background:#525252;"></div><div class="t" style="left:1065px;top:486.24px;font-size:8.0px;color:#ddd;">Linear</div><svg class="a" style="left:1108px;top:488px;" width="7" height="4" viewBox="0 0 7 4"><path d="M0 0h7L3.5 4z" fill="#ddd"/></svg><div class="a" style="left:1123px;top:451px;width:94px;height:49px;background:#3e3e3e;"></div><div class="a" style="left:1220px;top:454px;width:16px;height:48px;background:#4b4b4b;"></div><svg class="a" style="left:1225px;top:475px;" width="6" height="6" viewBox="0 0 6 6"><path d="M0 0l6 3-6 3 1.5-3z" fill="#ccc"/></svg><svg class="a" style="left:1131px;top:454px;" width="80" height="36" viewBox="0 0 80 36"><rect x="0.5" y="0.5" width="79" height="35" fill="#7e7e7e" stroke="#262626"/><path d="M1 1 L62 1 L78 30 L79 1 L1 1z" fill="#9c9c9c"/><path d="M1 1 L62 1 L78 30" fill="none" stroke="#2a2a2a" stroke-width="1.2"/><circle cx="62" cy="2" r="2.2" fill="#888" stroke="#eee" stroke-width="1"/></svg><div class="a" style="left:1190px;top:490px;width:7px;height:7px;background:#f0f0f0;"></div><svg class="a" style="left:1206px;top:490px;" width="6" height="7" viewBox="0 0 6 7"><rect x="0.5" y="0.5" width="5" height="6" fill="#444" stroke="#222"/></svg><div class="a" style="left:1063px;top:522px;width:44px;height:6px;background:#2b2b2b;"></div><div class="t" style="left:998px;top:522.24px;font-size:8.0px;color:#cfcfcf;clip-path:inset(0 0 45% 0)">Selected Position</div><div class="a" style="left:1131px;top:522px;width:80px;height:6px;background:#9c9c9c;"></div><div class="a" style="left:1220px;top:522px;width:16px;height:6px;background:#4b4b4b;"></div><div class="a" style="left:964px;top:528px;width:302px;height:5px;background:#444;"></div><div class="a" style="left:1256px;top:190px;width:9px;height:338px;background:#3a3a3a;"></div><div class="a" style="left:1257px;top:197px;width:7px;height:161px;background:#595959;"></div><svg class="a" style="left:1257px;top:191px;" width="7" height="4" viewBox="0 0 7 4"><path d="M0 4h7L3.5 0z" fill="#ddd"/></svg><svg class="a" style="left:1257px;top:521px;" width="7" height="4" viewBox="0 0 7 4"><path d="M0 0h7L3.5 4z" fill="#ddd"/></svg><div class="t" style="left:972px;top:536.24px;font-size:8.0px;color:#d0d0d0;">Notes:&nbsp; hairSystemShape1</div><div class="a" style="left:967px;top:543px;width:300px;height:66px;background:#2b2b2b;"></div><div class="a" style="left:966px;top:611px;width:99px;height:17px;background:#575757;"></div><div class="t" style="left:966px;width:99px;text-align:center;top:616.4px;font-size:8px;color:#e0e0e0">Select</div><div class="a" style="left:1066px;top:611px;width:102px;height:17px;background:#575757;"></div><div class="t" style="left:1066px;width:102px;text-align:center;top:616.4px;font-size:8px;color:#e0e0e0">Load Attributes</div><div class="a" style="left:1169px;top:611px;width:99px;height:17px;background:#575757;"></div><div class="t" style="left:1169px;width:99px;text-align:center;top:616.4px;font-size:8px;color:#e0e0e0">Copy Tab</div><div class="a" style="left:1268px;top:95px;width:12px;height:537px;background:#444;"></div><div class="a" style="left:1268px;top:97px;width:12px;height:75px;background:#3a3a3a;"></div><div class="a" style="left:1268px;top:238px;width:12px;height:112px;background:#3a3a3a;"></div><div class="a" style="left:1268px;top:352px;width:12px;height:24px;background:#3a3a3a;"></div><div class="t" style="left:1274px;top:134px;font-size:7.5px;color:#999;transform:translate(-50%,-50%) rotate(90deg);transform-origin:center">Modeling Toolkit</div><div class="t" style="left:1274px;top:204px;font-size:7.5px;color:#e0e0e0;transform:translate(-50%,-50%) rotate(90deg);transform-origin:center">Attribute Editor</div><div class="t" style="left:1274px;top:295px;font-size:7.5px;color:#999;transform:translate(-50%,-50%) rotate(90deg);transform-origin:center">Channel Box / Layer Editor</div><div class="t" style="left:1274px;top:363px;font-size:7.5px;color:#999;transform:translate(-50%,-50%) rotate(90deg);transform-origin:center">XGen</div><div class="a" style="left:0px;top:632px;width:1280px;height:86px;background:#444;"></div><div class="a" style="left:0px;top:634px;width:9px;height:22px;background:#3e3e3e;"></div><div class="a" style="left:9px;top:635px;width:1087px;height:20px;background:#2b2b2b;"></div><div class="a" style="left:15px;top:635px;width:9px;height:20px;background:#5a5a5a;"></div><div class="t" style="left:16.5px;top:636.21px;font-size:7px;color:#ddd;">0</div><div class="t" style="left:16.5px;top:645.48px;font-size:7.5px;color:#eee;">0</div><svg class="a" style="left:9px;top:635px;" width="1087" height="20" viewBox="0 0 1087 20"><rect x="27.0" y="9" width="1" height="10" fill="#bdbdbd"/><text x="28.0" y="6.3" font-size="6.5" fill="#7c7c7c" font-family="Liberation Sans">2</text><rect x="48.4" y="9" width="1" height="10" fill="#bdbdbd"/><text x="49.4" y="6.3" font-size="6.5" fill="#7c7c7c" font-family="Liberation Sans">4</text><rect x="69.7" y="9" width="1" height="10" fill="#bdbdbd"/><text x="70.7" y="6.3" font-size="6.5" fill="#7c7c7c" font-family="Liberation Sans">6</text><rect x="91.1" y="9" width="1" height="10" fill="#bdbdbd"/><text x="92.1" y="6.3" font-size="6.5" fill="#7c7c7c" font-family="Liberation Sans">8</text><rect x="112.4" y="9" width="1" height="10" fill="#bdbdbd"/><text x="113.4" y="6.3" font-size="6.5" fill="#7c7c7c" font-family="Liberation Sans">10</text><rect x="133.7" y="9" width="1" height="10" fill="#bdbdbd"/><text x="134.7" y="6.3" font-size="6.5" fill="#7c7c7c" font-family="Liberation Sans">12</text><rect x="155.1" y="9" width="1" height="10" fill="#bdbdbd"/><text x="156.1" y="6.3" font-size="6.5" fill="#7c7c7c" font-family="Liberation Sans">14</text><rect x="176.4" y="9" width="1" height="10" fill="#bdbdbd"/><text x="177.4" y="6.3" font-size="6.5" fill="#7c7c7c" font-family="Liberation Sans">16</text><rect x="197.8" y="9" width="1" height="10" fill="#bdbdbd"/><text x="198.8" y="6.3" font-size="6.5" fill="#7c7c7c" font-family="Liberation Sans">18</text><rect x="219.1" y="9" width="1" height="10" fill="#bdbdbd"/><text x="220.1" y="6.3" font-size="6.5" fill="#7c7c7c" font-family="Liberation Sans">20</text><rect x="240.4" y="9" width="1" height="10" fill="#bdbdbd"/><text x="241.4" y="6.3" font-size="6.5" fill="#7c7c7c" font-family="Liberation Sans">22</text><rect x="261.8" y="9" width="1" height="10" fill="#bdbdbd"/><text x="262.8" y="6.3" font-size="6.5" fill="#7c7c7c" font-family="Liberation Sans">24</text><rect x="283.1" y="9" width="1" height="10" fill="#bdbdbd"/><text x="284.1" y="6.3" font-size="6.5" fill="#7c7c7c" font-family="Liberation Sans">26</text><rect x="304.5" y="9" width="1" height="10" fill="#bdbdbd"/><text x="305.5" y="6.3" font-size="6.5" fill="#7c7c7c" font-family="Liberation Sans">28</text><rect x="325.8" y="9" width="1" height="10" fill="#bdbdbd"/><text x="326.8" y="6.3" font-size="6.5" fill="#7c7c7c" font-family="Liberation Sans">30</text><rect x="347.1" y="9" width="1" height="10" fill="#bdbdbd"/><text x="348.1" y="6.3" font-size="6.5" fill="#7c7c7c" font-family="Liberation Sans">32</text><rect x="368.5" y="9" width="1" height="10" fill="#bdbdbd"/><text x="369.5" y="6.3" font-size="6.5" fill="#7c7c7c" font-family="Liberation Sans">34</text><rect x="389.8" y="9" width="1" height="10" fill="#bdbdbd"/><text x="390.8" y="6.3" font-size="6.5" fill="#7c7c7c" font-family="Liberation Sans">36</text><rect x="411.2" y="9" width="1" height="10" fill="#bdbdbd"/><text x="412.2" y="6.3" font-size="6.5" fill="#7c7c7c" font-family="Liberation Sans">38</text><rect x="432.5" y="9" width="1" height="10" fill="#bdbdbd"/><text x="433.5" y="6.3" font-size="6.5" fill="#7c7c7c" font-family="Liberation Sans">40</text><rect x="453.8" y="9" width="1" height="10" fill="#bdbdbd"/><text x="454.8" y="6.3" font-size="6.5" fill="#7c7c7c" font-family="Liberation Sans">42</text><rect x="475.2" y="9" width="1" height="10" fill="#bdbdbd"/><text x="476.2" y="6.3" font-size="6.5" fill="#7c7c7c" font-family="Liberation Sans">44</text><rect x="496.5" y="9" width="1" height="10" fill="#bdbdbd"/><text x="497.5" y="6.3" font-size="6.5" fill="#7c7c7c" font-family="Liberation Sans">46</text><rect x="517.9" y="9" width="1" height="10" fill="#bdbdbd"/><text x="518.9" y="6.3" font-size="6.5" fill="#7c7c7c" font-family="Liberation Sans">48</text><rect x="539.2" y="9" width="1" height="10" fill="#bdbdbd"/><text x="540.2" y="6.3" font-size="6.5" fill="#7c7c7c" font-family="Liberation Sans">50</text><rect x="560.5" y="9" width="1" height="10" fill="#bdbdbd"/><text x="561.5" y="6.3" font-size="6.5" fill="#7c7c7c" font-family="Liberation Sans">52</text><rect x="581.9" y="9" width="1" height="10" fill="#bdbdbd"/><text x="582.9" y="6.3" font-size="6.5" fill="#7c7c7c" font-family="Liberation Sans">54</text><rect x="603.2" y="9" width="1" height="10" fill="#bdbdbd"/><text x="604.2" y="6.3" font-size="6.5" fill="#7c7c7c" font-family="Liberation Sans">56</text><rect x="624.6" y="9" width="1" height="10" fill="#bdbdbd"/><text x="625.6" y="6.3" font-size="6.5" fill="#7c7c7c" font-family="Liberation Sans">58</text><rect x="645.9" y="9" width="1" height="10" fill="#bdbdbd"/><text x="646.9" y="6.3" font-size="6.5" fill="#7c7c7c" font-family="Liberation Sans">60</text><rect x="667.2" y="9" width="1" height="10" fill="#bdbdbd"/><text x="668.2" y="6.3" font-size="6.5" fill="#7c7c7c" font-family="Liberation Sans">62</text><rect x="688.6" y="9" width="1" height="10" fill="#bdbdbd"/><text x="689.6" y="6.3" font-size="6.5" fill="#7c7c7c" font-family="Liberation Sans">64</text><rect x="709.9" y="9" width="1" height="10" fill="#bdbdbd"/><text x="710.9" y="6.3" font-size="6.5" fill="#7c7c7c" font-family="Liberation Sans">66</text><rect x="731.3" y="9" width="1" height="10" fill="#bdbdbd"/><text x="732.3" y="6.3" font-size="6.5" fill="#7c7c7c" font-family="Liberation Sans">68</text><rect x="752.6" y="9" width="1" height="10" fill="#bdbdbd"/><text x="753.6" y="6.3" font-size="6.5" fill="#7c7c7c" font-family="Liberation Sans">70</text><rect x="773.9" y="9" width="1" height="10" fill="#bdbdbd"/><text x="774.9" y="6.3" font-size="6.5" fill="#7c7c7c" font-family="Liberation Sans">72</text><rect x="795.3" y="9" width="1" height="10" fill="#bdbdbd"/><text x="796.3" y="6.3" font-size="6.5" fill="#7c7c7c" font-family="Liberation Sans">74</text><rect x="816.6" y="9" width="1" height="10" fill="#bdbdbd"/><text x="817.6" y="6.3" font-size="6.5" fill="#7c7c7c" font-family="Liberation Sans">76</text><rect x="838.0" y="9" width="1" height="10" fill="#bdbdbd"/><text x="839.0" y="6.3" font-size="6.5" fill="#7c7c7c" font-family="Liberation Sans">78</text><rect x="859.3" y="9" width="1" height="10" fill="#bdbdbd"/><text x="860.3" y="6.3" font-size="6.5" fill="#7c7c7c" font-family="Liberation Sans">80</text><rect x="880.6" y="9" width="1" height="10" fill="#bdbdbd"/><text x="881.6" y="6.3" font-size="6.5" fill="#7c7c7c" font-family="Liberation Sans">82</text><rect x="902.0" y="9" width="1" height="10" fill="#bdbdbd"/><text x="903.0" y="6.3" font-size="6.5" fill="#7c7c7c" font-family="Liberation Sans">84</text><rect x="923.3" y="9" width="1" height="10" fill="#bdbdbd"/><text x="924.3" y="6.3" font-size="6.5" fill="#7c7c7c" font-family="Liberation Sans">86</text><rect x="944.7" y="9" width="1" height="10" fill="#bdbdbd"/><text x="945.7" y="6.3" font-size="6.5" fill="#7c7c7c" font-family="Liberation Sans">88</text><rect x="966.0" y="9" width="1" height="10" fill="#bdbdbd"/><text x="967.0" y="6.3" font-size="6.5" fill="#7c7c7c" font-family="Liberation Sans">90</text><rect x="987.3" y="9" width="1" height="10" fill="#bdbdbd"/><text x="988.3" y="6.3" font-size="6.5" fill="#7c7c7c" font-family="Liberation Sans">92</text><rect x="1008.7" y="9" width="1" height="10" fill="#bdbdbd"/><text x="1009.7" y="6.3" font-size="6.5" fill="#7c7c7c" font-family="Liberation Sans">94</text><rect x="1030.0" y="9" width="1" height="10" fill="#bdbdbd"/><text x="1031.0" y="6.3" font-size="6.5" fill="#7c7c7c" font-family="Liberation Sans">96</text><rect x="1051.4" y="9" width="1" height="10" fill="#bdbdbd"/><text x="1052.4" y="6.3" font-size="6.5" fill="#7c7c7c" font-family="Liberation Sans">98</text><rect x="1072.7" y="9" width="1" height="10" fill="#bdbdbd"/><text x="1073.7" y="6.3" font-size="6.5" fill="#7c7c7c" font-family="Liberation Sans">100</text></svg><div class="a" style="left:1102px;top:640px;width:44px;height:11px;background:#2b2b2b;"></div><div class="t" style="left:1106px;top:641.74px;font-size:8px;color:#ddd;">0</div><svg class="a" style="left:1153px;top:640px;" width="120" height="11" viewBox="0 0 120 11"><rect x="0" y="0" width="1.5" height="10" fill="#d8d8d8"/><path d="M6 0v10L1.5 5zM11 0v10L6.5 5z" fill="#d8d8d8"/><rect x="16" y="0" width="1.5" height="10" fill="#d8d8d8"/><path d="M25 0v10l-7-5z" fill="#d8d8d8"/><rect x="31" y="0" width="1.5" height="10" fill="#e08a3a"/><path d="M41 0v10l-7.5-5z" fill="#d8d8d8"/><path d="M56 0v10l-8-5z" fill="#d8d8d8"/><path d="M62 0v10l9-5z" fill="#d8d8d8"/><path d="M78 0v10l7.5-5z" fill="#d8d8d8"/><rect x="86" y="0" width="1.5" height="10" fill="#e08a3a"/><path d="M93 0v10l7-5z" fill="#d8d8d8"/><rect x="101" y="0" width="1.5" height="10" fill="#d8d8d8"/><path d="M107 0v10l4.5-5zM111.5 0v10l5-5z" fill="#d8d8d8"/><rect x="117" y="0" width="1.5" height="10" fill="#d8d8d8"/></svg><div class="a" style="left:0px;top:657px;width:1280px;height:1px;background:#3c3c3c;"></div><div class="a" style="left:9px;top:662px;width:45px;height:14px;background:#2b2b2b;"></div><div class="t" style="left:12px;top:665.24px;font-size:8px;color:#ddd;">0</div><div class="a" style="left:61px;top:662px;width:44px;height:14px;background:#2b2b2b;"></div><div class="t" style="left:63px;top:665.24px;font-size:8px;color:#ddd;">0</div><div class="a" style="left:112px;top:663px;width:849px;height:12px;background:#5f5f5f;"></div><div class="a" style="left:116px;top:664px;width:9px;height:10px;background:#8a8a8a;"></div><div class="t" style="left:128px;top:665.24px;font-size:8px;color:#e0e0e0;">0</div><div class="t" style="left:936px;top:665.24px;font-size:8px;color:#e0e0e0;">100</div><div class="a" style="left:951px;top:664px;width:9px;height:10px;background:#8a8a8a;"></div><div class="a" style="left:971px;top:662px;width:45px;height:14px;background:#2b2b2b;"></div><div class="t" style="left:975px;top:665.24px;font-size:8px;color:#ddd;">100</div><div class="a" style="left:1022px;top:662px;width:44px;height:14px;background:#2b2b2b;"></div><div class="t" style="left:1025px;top:665.24px;font-size:8px;color:#ddd;">100</div><svg class="a" style="left:1072px;top:666px;" width="6" height="4" viewBox="0 0 6 4"><path d="M0 0h6L3 4z" fill="#777"/></svg><div class="a" style="left:1080px;top:661px;width:67px;height:17px;background:#484848;"></div><div class="t" style="left:1085px;top:666.24px;font-size:8.0px;color:#d0d0d0;">No Anim Layer</div><svg class="a" style="left:1157px;top:666px;" width="6" height="4" viewBox="0 0 6 4"><path d="M0 0h6L3 4z" fill="#777"/></svg><div class="a" style="left:1166px;top:661px;width:67px;height:17px;background:#484848;"></div><div class="t" style="left:1171px;top:666.24px;font-size:8.0px;color:#d0d0d0;">No Character Set</div><div class="a" style="left:1240px;top:661px;width:15px;height:16px;background:#5285a6;"></div><svg class="a" style="left:1242px;top:663px;" width="11" height="12" viewBox="0 0 11 12"><path d="M3 1v10M6 3v8M9 2v9" stroke="#e8c040" stroke-width="1.5"/><circle cx="2" cy="2" r="1.2" fill="#fff"/></svg><svg class="a" style="left:1259px;top:660px;" width="14" height="16" viewBox="0 0 14 16"><circle cx="4" cy="4" r="3" fill="none" stroke="#ccc" stroke-width="1.5"/><path d="M5 9l3-3 4 2-2 3 3 3M8 9l-3 5" stroke="#e87820" stroke-width="2.2" fill="none"/></svg><div class="a" style="left:0px;top:680px;width:1280px;height:2px;background:#393939;"></div><div class="t" style="left:16px;top:688.24px;font-size:8px;color:#dcdcdc;">MEL</div><div class="a" style="left:40px;top:685px;width:441px;height:14px;background:#2b2b2b;"></div><div class="a" style="left:481px;top:682px;width:7px;height:18px;background:#4a4a4a;"></div><div class="a" style="left:488px;top:685px;width:770px;height:14px;background:#2b2b2b;"></div><svg class="a" style="left:1262px;top:686px;" width="12" height="12" viewBox="0 0 12 12"><rect x="0.5" y="0.5" width="11" height="11" fill="#ddd" stroke="#999"/><rect x="0" y="0" width="12" height="3" fill="#fff"/><rect x="3" y="5" width="6" height="5" fill="none" stroke="#444"/></svg><div class="a" style="left:0px;top:700px;width:1280px;height:3px;background:#3f3f3f;"></div><div class="a" style="left:0px;top:703px;width:1280px;height:15px;background:#474747;"></div><div class="t" style="left:16px;top:708.95px;font-size:6.5px;color:#b0b0b0;">Rotation:</div><div class="t" style="left:49px;top:708.95px;font-size:6.5px;color:#b0b0b0;">-9.20</div><div class="t" style="left:81px;top:708.95px;font-size:6.5px;color:#b0b0b0;">0.60</div><div class="a" style="left:0px;top:718px;width:1280px;height:2px;background:#0a0a0a;"></div><svg class="a" style="left:1194px;top:684px;" width="34" height="28" viewBox="0 0 34 28"><path d="M4.5 13C7 10 10 6 12 4.5 10 10 8 17 9.5 23.5 11 20 15 12 22.8 7 21.5 13 22 17 25.5 19 27 18 28 17 29 17" fill="none" stroke="#8c8c8c" stroke-width="3" stroke-linecap="round" stroke-linejoin="round" opacity="0.85"/></svg><div class="t" style="left:1229px;top:692.89px;font-size:13px;color:#7c7c7c;letter-spacing:0;font-weight:bold;opacity:0.9">Udemy</div></body></html>
